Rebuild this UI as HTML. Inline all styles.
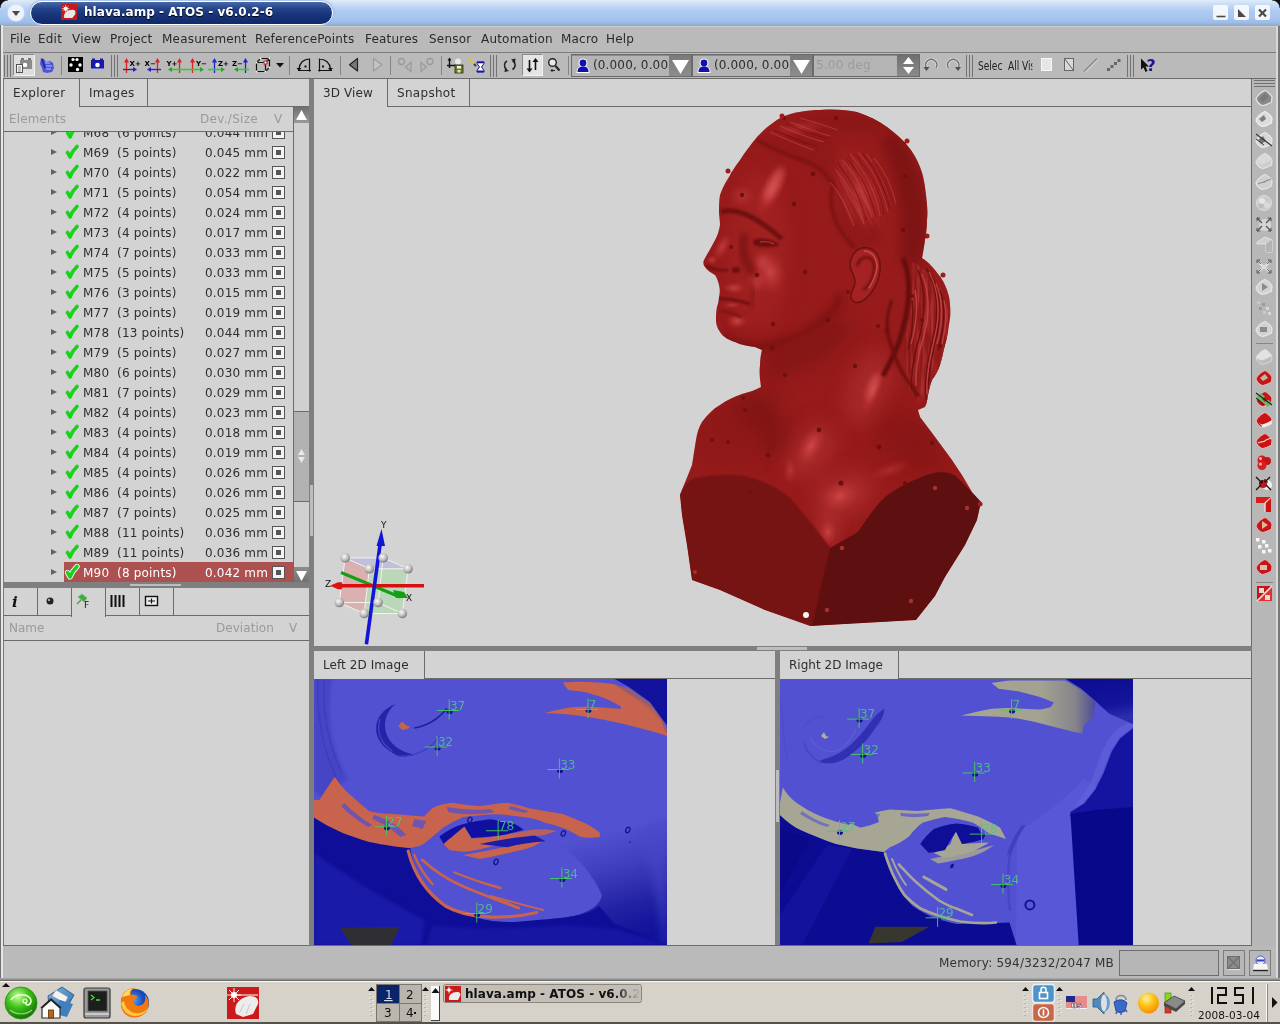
<!DOCTYPE html>
<html><head><meta charset="utf-8"><title>hlava.amp - ATOS - v6.0.2-6</title>
<style>
*{box-sizing:border-box;margin:0;padding:0}
html,body{width:1280px;height:1024px;overflow:hidden;background:#bababa;font-family:"DejaVu Sans","Liberation Sans",sans-serif;font-size:12px;color:#2e2e2e}
.a{position:absolute}
.t{position:absolute;white-space:nowrap;line-height:16px}
#titlebar{left:0;top:0;width:1280px;height:26px;background:linear-gradient(#dfebfa 0,#c6dbf6 20%,#aecbf1 42%,#a7c6ef 68%,#9dbde6 86%,#8ba8cf 100%)}
#pill{left:30px;top:1px;width:303px;height:24px;border-radius:12px;background:linear-gradient(#4a69a8 0,#25448a 30%,#17337a 60%,#0f2a6c 100%);border:1.5px solid #fff;box-shadow:0 0 2px 1px #9dbbe8}
#ttl{left:84px;top:4px;font-weight:bold;font-size:12px;color:#fff;letter-spacing:0.05px;text-shadow:0 1px 1px #000}
#menubar{left:0;top:26px;width:1280px;height:26px;background:#bababa}
.mi{position:absolute;top:31px;font-size:12px;color:#2a2a2a;white-space:nowrap;line-height:16px;letter-spacing:0.2px}
#toolbar{left:0;top:52px;width:1280px;height:27px;background:#bababa;border-top:1px solid #7d7d7d}
.panel{background:#d3d3d3}
.sep{position:absolute;top:56px;width:1px;height:19px;background:#858585}
.hdl{position:absolute;width:1px;background:#6f6f6f}
.tab{position:absolute;border:1px solid #6b6b6b;background:#d3d3d3;font-size:12px;line-height:16px;color:#2e2e2e;white-space:nowrap}
.row{position:absolute;left:0;margin-top:1px;width:293px;height:20px;font-size:12px;line-height:20px;color:#2e2e2e;letter-spacing:0.2px}
.row span{position:absolute;top:0;white-space:nowrap}
.row .ar{left:51px;top:6px;width:0;height:0;border-left:6px solid #636363;border-top:3.5px solid transparent;border-bottom:3.5px solid transparent}
.row .cb{left:272px;top:3px;width:13px;height:13px;background:#f4f4f4;border:1px solid #555}
.row .cb:after{content:"";position:absolute;left:3px;top:3px;width:5px;height:5px;background:#555}
.row svg{position:absolute;left:65px;top:2px}
.hd{color:#9a9a9a;font-size:12px;letter-spacing:0.3px}
#root{position:absolute;left:0;top:0;width:1280px;height:1024px;will-change:transform;overflow:hidden}
</style></head><body><div id="root">
<!-- title bar -->
<div class="a" id="titlebar"></div>
<div class="a" style="left:1272px;top:0;width:8px;height:8px;background:radial-gradient(circle at 0 100%,transparent 7px,#111 8px)"></div>
<div class="a" style="left:0;top:0;width:8px;height:8px;background:radial-gradient(circle at 100% 100%,transparent 7px,#111 8px)"></div>
<div class="a" style="left:8px;top:5px;width:16px;height:16px;border-radius:8px;background:#eef3fa;box-shadow:0 0 2px #fff"></div>
<svg class="a" style="left:11px;top:10px" width="10" height="7"><path d="M1 1h8L5 6z" fill="#4a4a4a"/></svg>
<div class="a" id="pill"></div>
<svg class="a" style="left:61px;top:4px" width="16" height="16" viewBox="0 0 17 17"><rect width="17" height="17" fill="#c51a1a"/><path d="M3 14c0-5 4-8 9-8 3 0 4 2 3 5l-3 4H4z" fill="#e8e8e8"/><circle cx="5" cy="5" r="2.2" fill="#fff"/><path d="M5 1v8M1 5h8M2.5 2.5l5 5M7.5 2.5l-5 5" stroke="#fff" stroke-width=".7"/></svg>
<div class="t" id="ttl">hlava.amp - ATOS - v6.0.2-6</div>
<div class="a" style="left:1213px;top:5px;width:15px;height:15px;border-radius:2px;background:rgba(248,250,253,.92)"></div>
<div class="a" style="left:1234px;top:5px;width:15px;height:15px;border-radius:2px;background:rgba(248,250,253,.92)"></div>
<div class="a" style="left:1255px;top:5px;width:15px;height:15px;border-radius:2px;background:rgba(248,250,253,.92)"></div>
<svg class="a" style="left:1213px;top:5px" width="58" height="15"><path d="M3.5 11.5h9" stroke="#4a4a4a" stroke-width="1.6"/><path d="M25 4v8h8z" fill="#4a4a4a"/><path d="M46 4.5l7 7M53 4.5l-7 7" stroke="#4a4a4a" stroke-width="2.2"/></svg>
<!-- menubar -->
<div class="a" id="menubar"></div>
<div class="a" id="mbtop" style="left:2px;top:26px;width:1275px;height:1px;background:#cdcdcd"></div>
<span class="mi" style="left:10px">File</span>
<span class="mi" style="left:38px">Edit</span>
<span class="mi" style="left:72px">View</span>
<span class="mi" style="left:110px">Project</span>
<span class="mi" style="left:162px">Measurement</span>
<span class="mi" style="left:255px">ReferencePoints</span>
<span class="mi" style="left:365px">Features</span>
<span class="mi" style="left:429px">Sensor</span>
<span class="mi" style="left:481px">Automation</span>
<span class="mi" style="left:561px">Macro</span>
<span class="mi" style="left:606px">Help</span>
<div class="a" id="toolbar"></div>
<div class="a" style="left:2px;top:78px;width:1275px;height:1px;background:#6b6b6b"></div>
<!-- window side borders -->
<div class="a" style="left:0;top:25px;width:1px;height:956px;background:#6f6f6f"></div>
<div class="a" style="left:1px;top:25px;width:2px;height:955px;background:#e6e6e6"></div>
<div class="a" style="left:1276px;top:26px;width:2px;height:956px;background:#d8d8d8"></div>
<div class="a" style="left:1278px;top:26px;width:2px;height:956px;background:#777"></div>
<!-- toolbar -->
<div class="a" style="left:13px;top:54px;width:22px;height:22px;background:#dedede;border:1px solid #8a8a8a;border-right-color:#f2f2f2;border-bottom-color:#f2f2f2"></div>
<div class="a" style="left:522px;top:54px;width:21px;height:22px;background:#e4e4e4;border:1px solid #8a8a8a;border-right-color:#f2f2f2;border-bottom-color:#f2f2f2"></div>
<svg class="a" style="left:0;top:52px" width="1280" height="27" viewBox="0 52 1280 27" font-family="DejaVu Sans, Liberation Sans, sans-serif">
<defs>
<marker id="mr" markerWidth="4" markerHeight="4" refX="2" refY="2" orient="auto"><path d="M0 0L4 2L0 4z" fill="#d22"/></marker>
</defs>
<!-- handles -->
<g stroke="#727272" stroke-width="1">
<path d="M4.5 55v22M7.5 55v22M10.5 55v22"/>
<path d="M111.500 55v22M114.500 55v22M117.500 55v22"/>
<path d="M490.500 55v22M493.500 55v22M496.500 55v22"/>
<path d="M966.500 55v22M969.500 55v22M972.500 55v22"/>
<path d="M1127.500 55v22M1130.500 55v22M1133.500 55v22"/>
</g>
<g stroke="#858585" stroke-width="1">
<path d="M61.500 56v19M289.500 56v19M340.500 56v19M390.500 56v19M441.500 56v19M568.500 56v19"/>
</g>
<!-- icon1: camera+doc -->
<rect x="20" y="60" width="12" height="9" fill="#8a8a8a"/><rect x="21" y="58" width="3" height="2" fill="#777"/><rect x="28" y="58" width="3" height="2" fill="#777"/><circle cx="25" cy="65" r="2.3" fill="#fff"/>
<rect x="16.500" y="64.500" width="6" height="8" fill="#f4f4f4" stroke="#555"/><path d="M18 67h3M18 69h3M18 71h3" stroke="#777" stroke-width=".8"/>
<!-- icon2: blue blob -->
<path d="M41 58l3 1 2 3 4-1 3 2 1 5-2 4-5 1-4-1-1-4-2-4z" fill="#4b55d8"/><path d="M45 63l5 0M46 66l6 0M46 69l5 0" stroke="#b9c0ff" stroke-width="1.2"/><path d="M42 59l3 9" stroke="#1a1f9a" stroke-width="1.5"/>
<!-- icon3: black square dots -->
<rect x="68" y="57" width="15" height="15" fill="#000"/><circle cx="73" cy="59.500" r="1.600" fill="#fff"/><circle cx="77" cy="59.500" r="1.600" fill="#fff"/><circle cx="71" cy="65" r="1.700" fill="#fff"/><circle cx="80" cy="65" r="1.700" fill="#fff"/><circle cx="77.500" cy="69.500" r="1.700" fill="#fff"/>
<!-- icon4: blue camera -->
<rect x="91" y="60" width="13" height="8" fill="#1a1aa8"/><rect x="92" y="58.500" width="3" height="1.500" fill="#1a1aa8"/><rect x="100" y="58.500" width="3" height="1.500" fill="#1a1aa8"/><circle cx="97.500" cy="65" r="2.300" fill="#fff"/><rect x="91" y="68" width="13" height="1" fill="#6a6ad0"/>
<!-- axis icons -->
<g font-size="7" font-weight="bold" fill="#000">
<path d="M126.500 73V60" stroke="#d22" stroke-width="1.300"/><path d="M124 62.500l2.500-4.500 2.500 4.500z" fill="#d22"/><path d="M123 69.500h11" stroke="#22c" stroke-width="1.300"/><path d="M133 67l4 2.500-4 2.500z" fill="#22c"/><text x="129.500" y="65.500">X+</text>
<path d="M157.500 73V60" stroke="#d22" stroke-width="1.300"/><path d="M155 62.500l2.500-4.500 2.500 4.500z" fill="#d22"/><path d="M150 69.500h11" stroke="#22c" stroke-width="1.300"/><path d="M151 67l-4 2.500 4 2.500z" fill="#22c"/><text x="144.500" y="65.500">X−</text>
<path d="M179.500 73V60" stroke="#d22" stroke-width="1.300"/><path d="M177 62.500l2.500-4.500 2.500 4.500z" fill="#d22"/><path d="M171 69.500h12" stroke="#3c3" stroke-width="1.600"/><path d="M172 67l-4 2.500 4 2.500z" fill="#2a2"/><text x="166.500" y="65.500">Y+</text>
<path d="M192.500 73V60" stroke="#d22" stroke-width="1.300"/><path d="M190 62.500l2.500-4.500 2.500 4.500z" fill="#d22"/><path d="M183 69.500h18" stroke="#3c3" stroke-width="1.600"/><path d="M200 67l4 2.500-4 2.500z" fill="#2a2"/><text x="196" y="65.500">Y−</text>
<path d="M214.500 73V60" stroke="#22c" stroke-width="1.300"/><path d="M212 62.500l2.500-4.500 2.500 4.500z" fill="#22c"/><path d="M208 69.500h14" stroke="#3c3" stroke-width="1.600"/><path d="M221 67l4 2.500-4 2.500z" fill="#2a2"/><text x="218" y="65.500">Z+</text>
<path d="M245.500 73V60" stroke="#22c" stroke-width="1.300"/><path d="M243 62.500l2.500-4.500 2.500 4.500z" fill="#22c"/><path d="M237 69.500h12" stroke="#3c3" stroke-width="1.600"/><path d="M238 67l-4 2.500 4 2.500z" fill="#2a2"/><text x="232" y="65.500">Z−</text>
</g>
<!-- cube icon -->
<g fill="none" stroke="#111" stroke-width="1.200"><path d="M256.500 62.500h9v9h-9zM256.500 62.500l4-4h9l-4 4M269.500 58.500v9l-4 4"/></g><path d="M263 61l5-2v5l-4 2z" fill="#c33" opacity=".8"/><g fill="#fff"><circle cx="256.500" cy="62.500" r="1"/><circle cx="265.500" cy="62.500" r="1"/><circle cx="256.500" cy="71.500" r="1"/><circle cx="265.500" cy="71.500" r="1"/><circle cx="260.500" cy="58.500" r="1"/><circle cx="269.500" cy="58.500" r="1"/><circle cx="269.500" cy="67.500" r="1"/></g>
<path d="M276 63h8l-4 4.500z" fill="#111"/>
<!-- rotate quarter icons -->
<g fill="none" stroke="#111" stroke-width="1.200"><path d="M298 70.500h13M309.500 58.500v13M309.500 59c-6 0-10 4-10.500 10"/><path d="M318 70.500h14M319.500 58.500v13M319.500 59c6 0 10.500 4 11 10"/></g>
<path d="M296.500 68h5l-2.500 3z" fill="#111"/><path d="M328 68h5l-2.500 3z" fill="#111"/><rect x="304.500" y="65.500" width="2" height="2" fill="#111"/><rect x="322" y="65.500" width="2" height="2" fill="#111"/>
<!-- triangles -->
<path d="M357.500 58.500v12.500l-8-6.250z" fill="#777" stroke="#222" stroke-width="1.200" stroke-linejoin="round"/>
<path d="M373.500 58.500v12.500l8.500-6.250z" fill="#c4c4c4" stroke="#9c9c9c" stroke-width="1.200" stroke-linejoin="round"/>
<!-- disabled circle+triangle -->
<g fill="none" stroke="#9a9a9a" stroke-width="1.300"><circle cx="401.500" cy="61.500" r="3"/><path d="M411 62.500v9l-5.500-4.500z"/><circle cx="430" cy="61.500" r="3"/><path d="M421 62.500v9l5.500-4.500z"/></g>
<!-- axis+floppy -->
<path d="M449.500 59v9M447 65.500h9" stroke="#111" stroke-width="1.400"/><path d="M447.500 60.500l2-3 2 3z" fill="#111"/><circle cx="458" cy="61.500" r="3" fill="#e8e8e8"/><rect x="455" y="65" width="8" height="8" fill="#6b7a2a" stroke="#2c3308" stroke-width=".8"/><rect x="457" y="66" width="4" height="2.500" fill="#f0f0f0"/><rect x="457.500" y="70" width="3" height="2.500" fill="#dfe6b0"/>
<!-- pencil+hourglass -->
<path d="M468.500 58.500l6.500 6.500" stroke="#e6c21a" stroke-width="1.800"/><path d="M474 64l2 2" stroke="#333" stroke-width="1.800"/><path d="M477 62h7v1.500l-2.500 3.500 2.500 3.500v1.500h-7v-1.500l2.500-3.500-2.500-3.500z" fill="#fff" stroke="#1a1aa0" stroke-width="1"/><rect x="477" y="61.500" width="7" height="1.800" fill="#1a1aa0"/><rect x="477" y="70.500" width="7" height="1.800" fill="#1a1aa0"/>
<!-- rotate arrows -->
<g fill="none" stroke="#222" stroke-width="1.500"><path d="M507 61c-3 1.500-3.500 6-.5 8.500"/><path d="M512.500 61c3.500 1.500 3.500 6.500 0 8.500"/></g><path d="M505 68l4 3-4.500 1z" fill="#222"/><path d="M515 62.500l-4-3 4.500-1z" fill="#222"/>
<!-- up/down arrows -->
<path d="M529.500 60v10M535.500 60v10" stroke="#111" stroke-width="1.600"/><path d="M526.500 68.500h6l-3 4z" fill="#111"/><path d="M532.500 62h6l-3-4z" fill="#111"/>
<!-- magnifier -->
<circle cx="552.500" cy="62.500" r="3.800" fill="#e8e8e8" stroke="#222" stroke-width="1.400"/><path d="M555.500 66l4 4.500" stroke="#222" stroke-width="2"/><path d="M551 70.500h4M551 70.500l1.500-1.500M551 70.500l1.500 1.500" stroke="#222" stroke-width="1"/>
<!-- disabled rotate icons -->
<g fill="none" stroke="#dcdcdc" stroke-width="3.400" opacity=".8"><path d="M926.500 68a5.600 5.600 0 1 1 9.500 0"/><path d="M948.500 68a5.600 5.600 0 1 1 9.500 0"/></g>
<g fill="none" stroke="#6e6e6e" stroke-width="1.300"><path d="M926.500 68a5.600 5.600 0 1 1 9.500 0"/><path d="M948.500 68a5.600 5.600 0 1 1 9.500 0"/></g><path d="M923.500 67h6l-3 4z" fill="#505050"/><path d="M955 67h6l-3 4z" fill="#505050"/>
<!-- select icons -->
<rect x="1041.500" y="58.500" width="10" height="12" fill="#e6e6e6" stroke="#f8f8f8"/><rect x="1064.500" y="58.500" width="9" height="12" fill="#d8d8d8" stroke="#666"/><path d="M1064.500 58.500l9 12" stroke="#666"/><path d="M1084 71.500l13-13" stroke="#888" stroke-width="1.400"/><path d="M1085 72.500l13-13" stroke="#ddd" stroke-width="1"/>
<g fill="#666"><rect x="1107" y="68" width="3" height="3"/><rect x="1110.500" y="65" width="3" height="3"/><rect x="1114" y="62" width="3" height="3"/><rect x="1117.500" y="59" width="3" height="3"/></g>
<!-- cursor ? -->
<path d="M1141 58.500v11l2.500-2 2 4.500 2-1-2-4.500h3.500z" fill="#111"/><text x="1146.500" y="71" font-size="16" font-weight="bold" fill="#1a1a90">?</text>
</svg>
<!-- combos -->
<div class="a" style="left:571px;top:54px;width:121px;height:23px;border:1px solid #6a6a6a;background:#b4b4b4;box-shadow:inset 0 1px 0 #8a8a8a"></div>
<div class="a" style="left:669px;top:55px;width:22px;height:21px;background:linear-gradient(#7a7a7a,#8c8c8c)"></div>
<div class="a" style="left:692px;top:54px;width:121px;height:23px;border:1px solid #6a6a6a;background:#b4b4b4;box-shadow:inset 0 1px 0 #8a8a8a"></div>
<div class="a" style="left:790px;top:55px;width:22px;height:21px;background:linear-gradient(#7a7a7a,#8c8c8c)"></div>
<div class="a" style="left:813px;top:54px;width:107px;height:23px;border:1px solid #6a6a6a;background:#b4b4b4;box-shadow:inset 0 1px 0 #8a8a8a"></div>
<div class="a" style="left:897px;top:55px;width:22px;height:21px;background:linear-gradient(#707070,#8a8a8a)"></div>
<svg class="a" style="left:571px;top:54px" width="350" height="23"><g fill="#fff"><path d="M101 6h17l-8.500 14z"/><path d="M222 6h17l-8.500 14z"/><path d="M332 10h11l-5.500-7z"/><path d="M332 13h11l-5.500 7z"/></g>
<g><path d="M5.500 19c0-5 2-7 6.500-7s6.500 2 6.500 7z" fill="#fff"/><circle cx="12" cy="9" r="4.500" fill="#fff"/><path d="M6.500 18c0-4 2-5.500 5.500-5.500s5.500 1.500 5.500 5.500z" fill="#1010b0"/><circle cx="12" cy="9" r="3.400" fill="#1010b0"/></g>
<g transform="translate(121 0)"><path d="M5.500 19c0-5 2-7 6.500-7s6.500 2 6.500 7z" fill="#fff"/><circle cx="12" cy="9" r="4.500" fill="#fff"/><path d="M6.500 18c0-4 2-5.500 5.500-5.500s5.500 1.500 5.500 5.500z" fill="#1010b0"/><circle cx="12" cy="9" r="3.400" fill="#1010b0"/></g></svg>
<div class="t" style="left:593px;top:57px;font-size:12px;letter-spacing:.15px;color:#2e2e2e;width:76px;overflow:hidden">(0.000, 0.000, 0.000)</div>
<div class="t" style="left:714px;top:57px;font-size:12px;letter-spacing:.15px;color:#2e2e2e;width:76px;overflow:hidden">(0.000, 0.000, 0.000)</div>
<div class="t" style="left:816px;top:57px;font-size:12px;letter-spacing:.2px;color:#9c9c9c">5.00 deg</div>
<div class="t" style="left:978px;top:58px;font-size:12px;font-family:'DejaVu Sans Condensed','DejaVu Sans',sans-serif;color:#222;width:28.600px;overflow:hidden;transform:scaleX(.84);transform-origin:0 0">Select</div>
<div class="t" style="left:1008px;top:58px;font-size:12px;font-family:'DejaVu Sans Condensed','DejaVu Sans',sans-serif;color:#222;width:28.500px;overflow:hidden;transform:scaleX(.84);transform-origin:0 0">All Visible</div>
<!-- left panel -->
<div class="a panel" style="left:3px;top:79px;width:306px;height:867px"></div>
<div class="a" style="left:3px;top:106px;width:306px;height:1px;background:#6b6b6b"></div>
<div class="tab" style="left:3px;top:79px;width:77px;height:28px;border-bottom:none;border-top:none;border-left:none;padding:6px 0 0 10px;letter-spacing:.3px">Explorer</div>
<div class="tab" style="left:80px;top:79px;width:68px;height:28px;border-top:none;border-left:none;padding:6px 0 0 9px;letter-spacing:.3px">Images</div>
<div class="a" style="left:3px;top:106px;width:291px;height:476px;overflow:hidden" id="tree">
<div class="row" style="top:16px"><span class="ar" style="left:48px"></span><svg width="16" height="19" style="left:62px;top:0"><path d="M2.500 9.500l2.500 4.500c1.500-4 4-7.500 7-10.500" fill="none" stroke="#16d416" stroke-width="3.600" stroke-linecap="round" stroke-linejoin="round"/></svg><span style="left:80px">M68</span><span style="left:114px">(6 points)</span><span style="left:202px">0.044 mm</span><span class="cb" style="left:269px"></span></div>
<div class="row" style="top:36px"><span class="ar" style="left:48px"></span><svg width="16" height="19" style="left:62px;top:0"><path d="M2.500 9.500l2.500 4.500c1.500-4 4-7.500 7-10.500" fill="none" stroke="#16d416" stroke-width="3.600" stroke-linecap="round" stroke-linejoin="round"/></svg><span style="left:80px">M69</span><span style="left:114px">(5 points)</span><span style="left:202px">0.045 mm</span><span class="cb" style="left:269px"></span></div>
<div class="row" style="top:56px"><span class="ar" style="left:48px"></span><svg width="16" height="19" style="left:62px;top:0"><path d="M2.500 9.500l2.500 4.500c1.500-4 4-7.500 7-10.500" fill="none" stroke="#16d416" stroke-width="3.600" stroke-linecap="round" stroke-linejoin="round"/></svg><span style="left:80px">M70</span><span style="left:114px">(4 points)</span><span style="left:202px">0.022 mm</span><span class="cb" style="left:269px"></span></div>
<div class="row" style="top:76px"><span class="ar" style="left:48px"></span><svg width="16" height="19" style="left:62px;top:0"><path d="M2.500 9.500l2.500 4.500c1.500-4 4-7.500 7-10.500" fill="none" stroke="#16d416" stroke-width="3.600" stroke-linecap="round" stroke-linejoin="round"/></svg><span style="left:80px">M71</span><span style="left:114px">(5 points)</span><span style="left:202px">0.054 mm</span><span class="cb" style="left:269px"></span></div>
<div class="row" style="top:96px"><span class="ar" style="left:48px"></span><svg width="16" height="19" style="left:62px;top:0"><path d="M2.500 9.500l2.500 4.500c1.500-4 4-7.500 7-10.500" fill="none" stroke="#16d416" stroke-width="3.600" stroke-linecap="round" stroke-linejoin="round"/></svg><span style="left:80px">M72</span><span style="left:114px">(4 points)</span><span style="left:202px">0.024 mm</span><span class="cb" style="left:269px"></span></div>
<div class="row" style="top:116px"><span class="ar" style="left:48px"></span><svg width="16" height="19" style="left:62px;top:0"><path d="M2.500 9.500l2.500 4.500c1.500-4 4-7.500 7-10.500" fill="none" stroke="#16d416" stroke-width="3.600" stroke-linecap="round" stroke-linejoin="round"/></svg><span style="left:80px">M73</span><span style="left:114px">(4 points)</span><span style="left:202px">0.017 mm</span><span class="cb" style="left:269px"></span></div>
<div class="row" style="top:136px"><span class="ar" style="left:48px"></span><svg width="16" height="19" style="left:62px;top:0"><path d="M2.500 9.500l2.500 4.500c1.500-4 4-7.500 7-10.500" fill="none" stroke="#16d416" stroke-width="3.600" stroke-linecap="round" stroke-linejoin="round"/></svg><span style="left:80px">M74</span><span style="left:114px">(7 points)</span><span style="left:202px">0.033 mm</span><span class="cb" style="left:269px"></span></div>
<div class="row" style="top:156px"><span class="ar" style="left:48px"></span><svg width="16" height="19" style="left:62px;top:0"><path d="M2.500 9.500l2.500 4.500c1.500-4 4-7.500 7-10.500" fill="none" stroke="#16d416" stroke-width="3.600" stroke-linecap="round" stroke-linejoin="round"/></svg><span style="left:80px">M75</span><span style="left:114px">(5 points)</span><span style="left:202px">0.033 mm</span><span class="cb" style="left:269px"></span></div>
<div class="row" style="top:176px"><span class="ar" style="left:48px"></span><svg width="16" height="19" style="left:62px;top:0"><path d="M2.500 9.500l2.500 4.500c1.500-4 4-7.500 7-10.500" fill="none" stroke="#16d416" stroke-width="3.600" stroke-linecap="round" stroke-linejoin="round"/></svg><span style="left:80px">M76</span><span style="left:114px">(3 points)</span><span style="left:202px">0.015 mm</span><span class="cb" style="left:269px"></span></div>
<div class="row" style="top:196px"><span class="ar" style="left:48px"></span><svg width="16" height="19" style="left:62px;top:0"><path d="M2.500 9.500l2.500 4.500c1.500-4 4-7.500 7-10.500" fill="none" stroke="#16d416" stroke-width="3.600" stroke-linecap="round" stroke-linejoin="round"/></svg><span style="left:80px">M77</span><span style="left:114px">(3 points)</span><span style="left:202px">0.019 mm</span><span class="cb" style="left:269px"></span></div>
<div class="row" style="top:216px"><span class="ar" style="left:48px"></span><svg width="16" height="19" style="left:62px;top:0"><path d="M2.500 9.500l2.500 4.500c1.500-4 4-7.500 7-10.500" fill="none" stroke="#16d416" stroke-width="3.600" stroke-linecap="round" stroke-linejoin="round"/></svg><span style="left:80px">M78</span><span style="left:114px">(13 points)</span><span style="left:202px">0.044 mm</span><span class="cb" style="left:269px"></span></div>
<div class="row" style="top:236px"><span class="ar" style="left:48px"></span><svg width="16" height="19" style="left:62px;top:0"><path d="M2.500 9.500l2.500 4.500c1.500-4 4-7.500 7-10.500" fill="none" stroke="#16d416" stroke-width="3.600" stroke-linecap="round" stroke-linejoin="round"/></svg><span style="left:80px">M79</span><span style="left:114px">(5 points)</span><span style="left:202px">0.027 mm</span><span class="cb" style="left:269px"></span></div>
<div class="row" style="top:256px"><span class="ar" style="left:48px"></span><svg width="16" height="19" style="left:62px;top:0"><path d="M2.500 9.500l2.500 4.500c1.500-4 4-7.500 7-10.500" fill="none" stroke="#16d416" stroke-width="3.600" stroke-linecap="round" stroke-linejoin="round"/></svg><span style="left:80px">M80</span><span style="left:114px">(6 points)</span><span style="left:202px">0.030 mm</span><span class="cb" style="left:269px"></span></div>
<div class="row" style="top:276px"><span class="ar" style="left:48px"></span><svg width="16" height="19" style="left:62px;top:0"><path d="M2.500 9.500l2.500 4.500c1.500-4 4-7.500 7-10.500" fill="none" stroke="#16d416" stroke-width="3.600" stroke-linecap="round" stroke-linejoin="round"/></svg><span style="left:80px">M81</span><span style="left:114px">(7 points)</span><span style="left:202px">0.029 mm</span><span class="cb" style="left:269px"></span></div>
<div class="row" style="top:296px"><span class="ar" style="left:48px"></span><svg width="16" height="19" style="left:62px;top:0"><path d="M2.500 9.500l2.500 4.500c1.500-4 4-7.500 7-10.500" fill="none" stroke="#16d416" stroke-width="3.600" stroke-linecap="round" stroke-linejoin="round"/></svg><span style="left:80px">M82</span><span style="left:114px">(4 points)</span><span style="left:202px">0.023 mm</span><span class="cb" style="left:269px"></span></div>
<div class="row" style="top:316px"><span class="ar" style="left:48px"></span><svg width="16" height="19" style="left:62px;top:0"><path d="M2.500 9.500l2.500 4.500c1.500-4 4-7.500 7-10.500" fill="none" stroke="#16d416" stroke-width="3.600" stroke-linecap="round" stroke-linejoin="round"/></svg><span style="left:80px">M83</span><span style="left:114px">(4 points)</span><span style="left:202px">0.018 mm</span><span class="cb" style="left:269px"></span></div>
<div class="row" style="top:336px"><span class="ar" style="left:48px"></span><svg width="16" height="19" style="left:62px;top:0"><path d="M2.500 9.500l2.500 4.500c1.500-4 4-7.500 7-10.500" fill="none" stroke="#16d416" stroke-width="3.600" stroke-linecap="round" stroke-linejoin="round"/></svg><span style="left:80px">M84</span><span style="left:114px">(4 points)</span><span style="left:202px">0.019 mm</span><span class="cb" style="left:269px"></span></div>
<div class="row" style="top:356px"><span class="ar" style="left:48px"></span><svg width="16" height="19" style="left:62px;top:0"><path d="M2.500 9.500l2.500 4.500c1.500-4 4-7.500 7-10.500" fill="none" stroke="#16d416" stroke-width="3.600" stroke-linecap="round" stroke-linejoin="round"/></svg><span style="left:80px">M85</span><span style="left:114px">(4 points)</span><span style="left:202px">0.026 mm</span><span class="cb" style="left:269px"></span></div>
<div class="row" style="top:376px"><span class="ar" style="left:48px"></span><svg width="16" height="19" style="left:62px;top:0"><path d="M2.500 9.500l2.500 4.500c1.500-4 4-7.500 7-10.500" fill="none" stroke="#16d416" stroke-width="3.600" stroke-linecap="round" stroke-linejoin="round"/></svg><span style="left:80px">M86</span><span style="left:114px">(4 points)</span><span style="left:202px">0.026 mm</span><span class="cb" style="left:269px"></span></div>
<div class="row" style="top:396px"><span class="ar" style="left:48px"></span><svg width="16" height="19" style="left:62px;top:0"><path d="M2.500 9.500l2.500 4.500c1.500-4 4-7.500 7-10.500" fill="none" stroke="#16d416" stroke-width="3.600" stroke-linecap="round" stroke-linejoin="round"/></svg><span style="left:80px">M87</span><span style="left:114px">(7 points)</span><span style="left:202px">0.025 mm</span><span class="cb" style="left:269px"></span></div>
<div class="row" style="top:416px"><span class="ar" style="left:48px"></span><svg width="16" height="19" style="left:62px;top:0"><path d="M2.500 9.500l2.500 4.500c1.500-4 4-7.500 7-10.500" fill="none" stroke="#16d416" stroke-width="3.600" stroke-linecap="round" stroke-linejoin="round"/></svg><span style="left:80px">M88</span><span style="left:114px">(11 points)</span><span style="left:202px">0.036 mm</span><span class="cb" style="left:269px"></span></div>
<div class="row" style="top:436px"><span class="ar" style="left:48px"></span><svg width="16" height="19" style="left:62px;top:0"><path d="M2.500 9.500l2.500 4.500c1.500-4 4-7.500 7-10.500" fill="none" stroke="#16d416" stroke-width="3.600" stroke-linecap="round" stroke-linejoin="round"/></svg><span style="left:80px">M89</span><span style="left:114px">(11 points)</span><span style="left:202px">0.036 mm</span><span class="cb" style="left:269px"></span></div>
<div class="a" style="left:61px;top:456px;width:230px;height:20px;background:#ad5050"></div>
<div class="row" style="top:456px;color:#fff"><span class="ar" style="left:48px"></span><svg width="16" height="19" style="left:62px;top:0"><path d="M2.500 9.500l2.500 4.500c1.500-4 4-7.500 7-10.500" fill="none" stroke="#f4f4f4" stroke-width="5.400" stroke-linecap="round" stroke-linejoin="round"/><path d="M2.500 9.500l2.500 4.500c1.500-4 4-7.500 7-10.500" fill="none" stroke="#16d416" stroke-width="3.600" stroke-linecap="round" stroke-linejoin="round"/></svg><span style="left:80px">M90</span><span style="left:114px">(8 points)</span><span style="left:202px">0.042 mm</span><span class="cb" style="left:269px"></span></div>
</div>
<div class="a" style="left:3px;top:107px;width:291px;height:25px;background:#d3d3d3;border-bottom:1px solid #6b6b6b"></div>
<div class="t hd" style="left:9px;top:111px;letter-spacing:.15px">Elements</div>
<div class="t hd" style="left:200px;top:111px">Dev./Size</div>
<div class="t hd" style="left:274px;top:111px">V</div>
<div class="a" style="left:293px;top:107px;width:16px;height:479px;background:#d0d0d0;border-left:1px solid #6b6b6b"></div>
<div class="a" style="left:294px;top:107px;width:15px;height:16px;background:linear-gradient(#6f6f6f,#9a9a9a)"></div>
<svg class="a" style="left:294px;top:107px" width="15" height="16"><path d="M2 13h11L7.500 3z" fill="#fff"/></svg>
<div class="a" style="left:294px;top:411px;width:15px;height:91px;background:#b2b2b2;border-top:1px solid #6b6b6b;border-bottom:1px solid #6b6b6b"></div>
<svg class="a" style="left:294px;top:446px" width="15" height="20"><path d="M4 9h7L7.500 3zM4 11h7L7.500 17z" fill="#e8e8e8"/></svg>
<div class="a" style="left:294px;top:567px;width:15px;height:17px;background:linear-gradient(#8c8c8c,#6f6f6f)"></div>
<svg class="a" style="left:294px;top:567px" width="15" height="17"><path d="M2 4h11L7.500 14z" fill="#fff"/></svg>
<div class="a" style="left:3px;top:582px;width:306px;height:6px;background:#7f7f7f"></div>
<div class="a" style="left:130px;top:584px;width:51px;height:2px;background:#bdbdbd"></div>
<div class="a" style="left:3px;top:615px;width:306px;height:1px;background:#6b6b6b"></div>
<div class="tab" style="left:3px;top:588px;width:35px;height:28px;border-top:none"></div>
<div class="tab" style="left:37px;top:588px;width:35px;height:28px;border-top:none"></div>
<div class="tab" style="left:71px;top:588px;width:35px;height:29px;border-bottom:none;border-top:none"></div>
<div class="tab" style="left:105px;top:588px;width:35px;height:28px;border-top:none"></div>
<div class="tab" style="left:139px;top:588px;width:35px;height:28px;border-top:none"></div>
<svg class="a" style="left:3px;top:588px" width="175" height="28" font-family="DejaVu Serif, Liberation Serif, serif">
<text x="9" y="19" font-size="15" font-weight="bold" font-style="italic" fill="#111">i</text>
<circle cx="47" cy="13" r="3.500" fill="#222"/><circle cx="46" cy="12" r="1.200" fill="#aaa"/>
<path d="M75 9l4-3 5 4-3 4z" fill="#4a4" stroke="#7b7" stroke-width=".6"/><path d="M74 16l4-4" stroke="#595" stroke-width="1.500"/><text x="81" y="20" font-size="9" font-family="DejaVu Sans, Liberation Sans, sans-serif" fill="#111">F</text>
<path d="M108.500 7v12M112.500 7v12M116.500 7v12M120.500 7v12" stroke="#111" stroke-width="2"/>
<rect x="142.500" y="8.500" width="12" height="9" fill="#eee" stroke="#111" stroke-width="1.400"/><path d="M145 13h7M148.500 10.500v5" stroke="#111" stroke-width="1.200"/>
</svg>
<div class="a" style="left:3px;top:640px;width:306px;height:1px;background:#6b6b6b"></div>
<div class="t hd" style="left:9px;top:620px;letter-spacing:0">Name</div>
<div class="t hd" style="left:216px;top:620px;letter-spacing:.05px">Deviation</div>
<div class="t hd" style="left:289px;top:620px">V</div>
<div class="a" style="left:3px;top:79px;width:1px;height:867px;background:#7a7a7a"></div>
<div class="a" style="left:3px;top:945px;width:306px;height:1px;background:#6b6b6b"></div>
<div class="a" style="left:309px;top:79px;width:5px;height:867px;background:#7f7f7f"></div>
<div class="a" style="left:310px;top:485px;width:3px;height:51px;background:#bdbdbd"></div>
<!-- main 3D panel -->
<div class="a panel" style="left:314px;top:79px;width:938px;height:567px;border-right:1px solid #6b6b6b"></div>
<div class="a" style="left:314px;top:106px;width:937px;height:1px;background:#6b6b6b"></div>
<div class="tab" style="left:314px;top:79px;width:74px;height:28px;border-bottom:none;border-left:none;border-top:none;padding:6px 0 0 9px;letter-spacing:.1px">3D View</div>
<div class="tab" style="left:388px;top:79px;width:82px;height:28px;border-top:none;border-left:none;padding:6px 0 0 9px;letter-spacing:.3px">Snapshot</div>
<!-- horizontal splitter -->
<div class="a" style="left:314px;top:646px;width:938px;height:5px;background:#7f7f7f"></div>
<div class="a" style="left:757px;top:647px;width:50px;height:3px;background:#bdbdbd"></div>
<svg class="a" style="left:314px;top:107px" width="937" height="539" viewBox="314 107 937 539">
<defs>
<filter id="b3" color-interpolation-filters="sRGB" x="-50%" y="-50%" width="200%" height="200%"><feGaussianBlur stdDeviation="3"/></filter>
<filter id="b6" color-interpolation-filters="sRGB" x="-50%" y="-50%" width="200%" height="200%"><feGaussianBlur stdDeviation="6"/></filter>
<filter id="b10" color-interpolation-filters="sRGB" x="-50%" y="-50%" width="200%" height="200%"><feGaussianBlur stdDeviation="10"/></filter>
<filter id="b1" color-interpolation-filters="sRGB" x="-50%" y="-50%" width="200%" height="200%"><feGaussianBlur stdDeviation="1.2"/></filter>
<filter id="strk" color-interpolation-filters="sRGB" x="-10%" y="-10%" width="120%" height="120%"><feTurbulence type="fractalNoise" baseFrequency="0.35 0.03" numOctaves="2" seed="4" result="n"/><feColorMatrix in="n" type="matrix" values="0 0 0 0 1  0 0 0 0 1  0 0 0 0 1  2.6 0 0 0 -1.05" result="a"/><feComposite in="SourceGraphic" in2="a" operator="in"/></filter>
<clipPath id="hc"><path id="hp" d="M820 110C835 109 847 110 857 112C869 116 879 121 887 127C895 133 902 139 907 145C913 152 917 159 920 167C924 177 925 186 926 195C927 204 928 212 927 220C927 228 926 234 925 240C924 247 923 253 922 258C927 261 931 265 935 270C939 275 943 280 945 285C948 292 950 298 950 305C951 312 950 319 949 325C948 332 947 339 945 345C943 352 942 359 940 365C938 371 935 376 932 380C930 385 929 390 928 395C927 400 927 404 925 407L918 410L920 417L935 437L952 460L962 475L972 492L981 502L977 520L965 545L945 577L935 596L916 620L845 624L810 626L765 610L720 590L692 580L687 545L682 515L680 495L692 465L696 440C697 433 699 427 702 422C707 415 713 409 720 405C727 400 734 397 742 394C749 392 756 390 761 387C760 380 759 372 760 365C760 359 761 354 762 350L755 347C748 346 741 345 735 342C729 340 723 337 720 332C717 328 716 324 716 320C716 316 716 311 717 307C718 304 719 300 719 297C720 293 720 289 719 285C718 281 717 278 715 275C711 273 707 270 705 267C703 265 703 262 704 260C707 254 711 248 714 242C717 237 719 231 720 225C720 221 719 216 719 212C719 206 719 200 720 195C722 189 725 183 729 177C732 171 736 165 740 160C745 152 751 144 757 137C764 129 773 122 782 117C794 112 807 110 820 110Z"/></clipPath>
<radialGradient id="hl" cx=".5" cy=".5" r=".5"><stop offset="0" stop-color="#d04a4a" stop-opacity=".95"/><stop offset=".5" stop-color="#c03838" stop-opacity=".6"/><stop offset="1" stop-color="#b02a2a" stop-opacity="0"/></radialGradient>
<radialGradient id="dk" cx=".5" cy=".5" r=".5"><stop offset="0" stop-color="#701010" stop-opacity=".8"/><stop offset="1" stop-color="#801414" stop-opacity="0"/></radialGradient>
</defs>
<use href="#hp" fill="#971b1b"/>
<g clip-path="url(#hc)">
<!-- broad shading -->
<path d="M893 130C915 150 926 185 927 220C927 240 924 255 920 268L900 262C905 230 900 180 880 140Z" fill="#7e1414" filter="url(#b6)"/>
<ellipse cx="850" cy="122" rx="55" ry="12" fill="#8a1717" filter="url(#b6)" opacity=".8"/>
<path d="M755 140C775 150 800 160 817 170C830 180 838 200 840 224C845 235 850 242 856 248L880 240C870 200 850 160 820 135Z" fill="#8c1818" filter="url(#b3)" opacity=".7"/>
<path d="M762 350C790 350 820 335 842 312L852 330C836 352 806 374 764 374Z" fill="#801515" filter="url(#b10)" opacity=".9"/>
<path d="M764 388C775 400 785 420 790 446L770 460C760 440 745 420 720 410Z" fill="#801515" filter="url(#b10)" opacity=".9"/>
<ellipse cx="725" cy="440" rx="30" ry="30" fill="#8c1818" filter="url(#b10)" opacity=".7"/>
<ellipse cx="905" cy="440" rx="40" ry="22" fill="#8c1818" filter="url(#b10)" opacity=".7" transform="rotate(40 905 440)"/>
<ellipse cx="868" cy="388" rx="20" ry="40" fill="#b43434" opacity=".55" filter="url(#b10)" transform="rotate(20 868 388)"/>
<ellipse cx="812" cy="452" rx="20" ry="32" fill="#b43434" opacity=".55" filter="url(#b10)" transform="rotate(35 812 452)"/>
<ellipse cx="843" cy="495" rx="32" ry="20" fill="#b63636" opacity=".6" filter="url(#b10)" transform="rotate(-25 843 495)"/>
<ellipse cx="829" cy="528" rx="13" ry="18" fill="#b43434" opacity=".5" filter="url(#b6)"/>
<ellipse cx="758" cy="250" rx="30" ry="80" fill="#ac2828" opacity=".45" filter="url(#b10)"/>
<ellipse cx="915" cy="445" rx="34" ry="20" fill="#861616" opacity=".7" filter="url(#b10)" transform="rotate(45 915 445)"/>
<!-- highlights -->
<ellipse cx="772" cy="189" rx="11" ry="30" fill="url(#hl)" transform="rotate(27 772 189)"/>
<ellipse cx="774" cy="184" rx="5" ry="18" fill="#dc5a5a" opacity=".6" filter="url(#b3)" transform="rotate(27 774 184)"/>
<ellipse cx="742" cy="196" rx="14" ry="12" fill="url(#hl)" opacity=".45"/>
<ellipse cx="770" cy="272" rx="17" ry="24" fill="url(#hl)" opacity=".9" transform="rotate(-10 770 272)"/>
<ellipse cx="762" cy="262" rx="6" ry="7" fill="#d45252" opacity=".5" filter="url(#b3)"/>
<ellipse cx="756" cy="282" rx="6" ry="8" fill="#d45252" opacity=".4" filter="url(#b3)"/>
<ellipse cx="737" cy="321" rx="11" ry="8" fill="url(#hl)" opacity=".9"/>
<ellipse cx="722" cy="247" rx="7" ry="16" fill="url(#hl)" opacity=".7" transform="rotate(28 722 247)"/>
<ellipse cx="712" cy="260" rx="6" ry="5" fill="url(#hl)" opacity=".7"/>
<ellipse cx="734" cy="288" rx="12" ry="6" fill="url(#hl)" opacity=".8"/>
<ellipse cx="732" cy="305" rx="9" ry="3.500" fill="url(#hl)" opacity=".6"/>
<ellipse cx="800" cy="128" rx="30" ry="8" fill="url(#hl)" opacity=".4" transform="rotate(-8 800 128)"/>
<g filter="url(#strk)" transform="rotate(-24 858 192)"><ellipse cx="858" cy="192" rx="30" ry="52" fill="url(#hl)"/></g>
<ellipse cx="858" cy="192" rx="22" ry="40" fill="url(#hl)" opacity=".45" transform="rotate(-24 858 192)"/>
<ellipse cx="873" cy="390" rx="8" ry="26" fill="url(#hl)" transform="rotate(22 873 390)"/>
<ellipse cx="872" cy="386" rx="3.500" ry="14" fill="#dc5c5c" opacity=".6" filter="url(#b3)" transform="rotate(22 872 386)"/>
<ellipse cx="811" cy="446" rx="12" ry="24" fill="url(#hl)" transform="rotate(28 811 446)"/>
<ellipse cx="840" cy="496" rx="22" ry="16" fill="url(#hl)" opacity=".9" transform="rotate(-25 840 496)"/>
<ellipse cx="828" cy="532" rx="9" ry="14" fill="url(#hl)" opacity=".8"/>
<ellipse cx="790" cy="470" rx="7" ry="14" fill="url(#hl)" opacity=".5"/>
<ellipse cx="890" cy="470" rx="22" ry="8" fill="url(#hl)" opacity=".4" transform="rotate(-20 890 470)"/>
<!-- face features (dark) -->
<path d="M721 212c10-3 22 0 34 7 10 6 18 12 27 20" stroke="#6e1010" stroke-width="5" fill="none" filter="url(#b1)"/>
<path d="M753 240c8-3 18-2 27 5-8 3-18 3-26 0z" fill="#6a0f0f" filter="url(#b1)"/>
<path d="M760 242c5-1 10 0 14 2" stroke="#a83030" stroke-width="1.400" fill="none"/>
<path d="M745 234c-4 12-1 28 8 40" stroke="#781313" stroke-width="7" fill="none" filter="url(#b3)"/>
<path d="M706 266c6 3 14 5 22 4" stroke="#6c1010" stroke-width="2.600" fill="none" filter="url(#b1)"/>
<ellipse cx="736" cy="270" rx="4" ry="3" fill="#6a0f0f" filter="url(#b1)"/>
<path d="M716 299c10-1 22 1 34 5" stroke="#6a0f0f" stroke-width="2.600" fill="none" filter="url(#b1)"/>
<path d="M720 311c6 0 14 3 22 6" stroke="#7c1414" stroke-width="2.600" fill="none" filter="url(#b1)"/>
<path d="M751 283c3 8 3 18-1 26" stroke="#821616" stroke-width="3.500" fill="none" filter="url(#b3)"/>
<path d="M722 336c14 8 30 12 44 10 22-4 46-14 62-30 6-6 10-14 13-22" stroke="#7a1313" stroke-width="7" fill="none" filter="url(#b3)" opacity=".9"/>
<!-- hairline -->
<path d="M757 140c14 8 32 16 46 20 12 4 22 12 30 24 -4 12-2 28 4 40 4 8 10 16 18 24" stroke="#761212" stroke-width="3.500" fill="none" filter="url(#b1)" opacity=".75"/>
<!-- hair strands -->
<g stroke="#c84a4a" stroke-width="1.100" fill="none" opacity=".55">
<path d="M842 160c14 14 24 34 30 58M850 154c14 16 26 38 30 62M836 170c12 14 22 32 28 54M858 152c14 16 24 36 30 60M866 154c12 14 20 30 26 52M830 182c10 12 18 26 24 44M874 158c10 12 18 28 22 46"/>
<path d="M770 132c14 6 30 14 44 18M780 126c14 6 28 12 44 16M790 122c14 5 26 10 40 14M800 118c14 4 26 8 38 12"/>
</g>
<g stroke="#701010" stroke-width="1.100" fill="none" opacity=".6">
<path d="M846 158c14 15 25 36 30 60M854 153c14 16 26 38 30 61M838 164c12 14 22 32 28 56M862 153c13 15 22 33 28 56M872 162c10 12 16 26 20 44M774 130c14 6 30 13 44 17M786 124c14 6 28 11 42 15"/>
</g>
<!-- ear -->
<path d="M850 264c1-11 9-18 18-16 9 2 13 11 12 22-1 12-8 24-16 30-7 5-14 2-13-5 1-6 4-8 4-14 0-6-5-9-5-17z" fill="#a42222" stroke="#701010" stroke-width="1.600"/>
<path d="M857 266c2-7 7-10 12-8 6 2 6 11 4 17-2 7-6 12-10 15" stroke="#6e1010" stroke-width="2.400" fill="none" filter="url(#b1)"/>
<path d="M864 251c8 0 13 7 13 16-1 8-4 15-8 21" stroke="#cc4c4c" stroke-width="1.600" fill="none" opacity=".9"/>
<!-- ponytail -->
<path d="M903 258c10 22 6 54-4 84-5 14-12 26-16 34" stroke="#640d0d" stroke-width="5" fill="none" filter="url(#b1)"/>
<path d="M912 262C930 270 946 290 948 312C950 340 940 372 928 404L912 396C906 380 902 360 905 340C910 312 915 285 912 262Z" fill="#8e1919"/>
<g filter="url(#strk)"><path d="M912 262C930 270 946 290 948 312C950 340 940 372 928 404L912 396C906 380 902 360 905 340C910 312 915 285 912 262Z" fill="#b83a3a" opacity=".8"/></g>
<g stroke="#6e1010" stroke-width="1.500" fill="none">
<path d="M926 268c10 16 14 40 8 66-4 18-10 40-8 66M932 276c8 16 10 38 4 62-4 18-8 34-8 52M918 270c8 20 8 46 0 72-4 14-8 30-6 48M940 290c6 16 4 40-2 60M912 300c2 16 0 34-4 50"/>
</g>
<g stroke="#c44444" stroke-width="1.400" fill="none" opacity=".85">
<path d="M929 272c9 16 12 40 6 64-4 18-9 36-8 58M922 274c8 20 8 44 0 68-4 14-7 28-6 44M936 284c7 16 7 38 1 60M944 300c3 12 2 28-2 44M915 290c3 16 1 36-4 54"/>
</g>
<path d="M886 328c4 14 8 30 16 44 6 10 14 20 20 30" stroke="#6e1010" stroke-width="3.500" fill="none" filter="url(#b1)"/>
<path d="M892 300c-4 10-6 22-4 32" stroke="#6a0f0f" stroke-width="3" fill="none" filter="url(#b1)"/>
<!-- cut faces -->
<path d="M680 495C683 487 688 480 694 478C712 474 730 474 745 476C762 480 778 488 790 498C802 510 816 530 830 548L812 626L765 610L720 590L692 580L687 545L682 515Z" fill="#761313"/>
<path d="M830 548L858 532C866 520 874 508 884 498C896 488 912 480 930 474C940 471 950 472 956 476L981 502L977 520L965 545L945 577L935 596L916 620L845 624L812 626Z" fill="#5e0f0f"/>
<path d="M680 495C683 487 688 480 694 478C712 474 730 474 745 476C762 480 778 488 790 498C802 510 816 530 830 548" stroke="#8a1717" stroke-width="1.500" fill="none"/>
<path d="M830 548l-18 78" stroke="#6e1111" stroke-width="1.200"/>
<!-- bumps -->
<g fill="#6e1010">
<circle cx="836" cy="118" r="2.200"/><circle cx="784" cy="118" r="2"/><circle cx="906" cy="142" r="2.200"/><circle cx="813" cy="174" r="2.400"/><circle cx="742" cy="195" r="2.200"/><circle cx="794" cy="204" r="2.400"/><circle cx="905" cy="176" r="2.200"/><circle cx="730" cy="172" r="2"/><circle cx="903" cy="230" r="2.200"/><circle cx="926" cy="236" r="2.200"/><circle cx="731" cy="247" r="2"/><circle cx="757" cy="275" r="2.200"/><circle cx="805" cy="272" r="2.200"/><circle cx="848" cy="292" r="2"/><circle cx="828" cy="320" r="2.400"/><circle cx="773" cy="324" r="2.200"/><circle cx="772" cy="348" r="2.400"/><circle cx="942" cy="276" r="2.200"/><circle cx="922" cy="320" r="2"/><circle cx="912" cy="296" r="2"/><circle cx="878" cy="326" r="2"/><circle cx="940" cy="346" r="2"/>
<circle cx="785" cy="375" r="2.200"/><circle cx="855" cy="366" r="2.200"/><circle cx="743" cy="398" r="2"/><circle cx="745" cy="410" r="2"/><circle cx="712" cy="440" r="2"/><circle cx="728" cy="442" r="2"/><circle cx="768" cy="455" r="2.200"/><circle cx="819" cy="430" r="2.400"/><circle cx="879" cy="447" r="2.400"/><circle cx="932" cy="443" r="2.200"/><circle cx="841" cy="483" r="2.600"/><circle cx="905" cy="483" r="2"/>
</g>
<g fill="#a83030"><circle cx="935" cy="488" r="2.200"/><circle cx="967" cy="508" r="2.200"/><circle cx="842" cy="548" r="2.200"/><circle cx="827" cy="610" r="2.200"/><circle cx="911" cy="601" r="2.200"/><circle cx="695" cy="572" r="2"/><circle cx="750" cy="492" r="1.800" fill="#6a1010"/></g>
<circle cx="806" cy="615" r="3" fill="#f4f4f4"/>
</g>
<!-- rim bumps outside silhouette -->
<g fill="#9e1c1c"><circle cx="782" cy="116" r="2.500"/><circle cx="907" cy="141" r="2.500"/><circle cx="728" cy="171" r="2.500"/><circle cx="927" cy="236" r="2.500"/><circle cx="943" cy="275" r="2.500"/><circle cx="980" cy="504" r="2.500"/><circle cx="920" cy="400" r="4"/></g>
</svg>
<svg class="a" style="left:314px;top:510px" width="140" height="136" viewBox="314 510 140 136" font-family="DejaVu Sans, Liberation Sans, sans-serif">
<defs><radialGradient id="sp" cx=".4" cy=".35" r=".65"><stop offset="0" stop-color="#fafafa"/><stop offset=".6" stop-color="#bdbdbd"/><stop offset="1" stop-color="#7c7c7c"/></radialGradient></defs>
<path d="M345.200 557.900L383.200 557.900L408.100 568.800L369.300 568.800Z" fill="#b9b9dc" opacity=".75"/>
<path d="M345.200 557.900L369.300 568.800L364.200 613.500L339.300 602.500Z" fill="#dca8a8" opacity=".8"/>
<path d="M369.300 568.800L408.100 568.800L402.300 613.500L364.200 613.500Z" fill="#b4d8b4" opacity=".8"/>
<g stroke="#f2f2f2" stroke-width="1" fill="none"><path d="M345.200 557.900L383.200 557.900L408.100 568.800L369.300 568.800ZM345.200 557.900L339.300 602.500L364.200 613.500L402.300 613.500L408.100 568.800M369.300 568.800L364.200 613.500M383.200 557.900L378.100 602.500L339.300 602.500M378.100 602.500L402.300 613.500"/></g>
<path d="M341 572.500L400 597" stroke="#14a014" stroke-width="3"/><path d="M393 590l11 2 4 6-12 0z" fill="#14a014"/>
<path d="M336 585.700H424" stroke="#d80f0f" stroke-width="3.400"/><path d="M330 585.700l8-3.500h4v7h-4z" fill="#e01010"/>
<path d="M380 545L366.400 644.300" stroke="#1414d8" stroke-width="3.600"/><path d="M381.500 529l3.500 17h-8.500z" fill="#1414d8"/>
<g fill="url(#sp)"><circle cx="345.200" cy="557.900" r="4.800"/><circle cx="383.200" cy="557.900" r="4.800"/><circle cx="408.100" cy="568.800" r="4.800"/><circle cx="369.300" cy="568.800" r="4.800"/><circle cx="339.300" cy="602.500" r="4.800"/><circle cx="378.100" cy="602.500" r="4.800"/><circle cx="402.300" cy="613.500" r="4.800"/><circle cx="364.200" cy="613.500" r="4.800"/></g>
<text x="381" y="528" font-size="9" fill="#111">Y</text><text x="325" y="587" font-size="9" fill="#111">Z</text><text x="406" y="601" font-size="9" fill="#111">X</text>
</svg>
<!-- bottom panels -->
<div class="a panel" style="left:314px;top:651px;width:461px;height:295px"></div>
<div class="a panel" style="left:780px;top:651px;width:472px;height:295px;border-right:1px solid #6b6b6b"></div>
<div class="a" style="left:775px;top:651px;width:5px;height:295px;background:#7f7f7f"></div>
<div class="a" style="left:776px;top:770px;width:3px;height:52px;background:#bdbdbd"></div>
<div class="a" style="left:314px;top:678px;width:461px;height:1px;background:#6b6b6b"></div>
<div class="a" style="left:780px;top:678px;width:471px;height:1px;background:#6b6b6b"></div>
<div class="tab" style="left:314px;top:651px;width:111px;height:28px;border:none;border-right:1px solid #6b6b6b;padding:6px 0 0 9px;letter-spacing:.08px">Left 2D Image</div>
<div class="tab" style="left:780px;top:651px;width:119px;height:28px;border:none;border-right:1px solid #6b6b6b;padding:6px 0 0 9px;letter-spacing:.02px">Right 2D Image</div>
<div class="a" style="left:314px;top:945px;width:937px;height:1px;background:#6b6b6b"></div>
<!-- status bar -->
<div class="t" style="left:939px;top:955px;font-size:12px;letter-spacing:.2px;color:#333">Memory: 594/3232/2047 MB</div>
<div class="a" style="left:1119px;top:950px;width:100px;height:26px;border:1px solid #6e6e6e;background:#b6b6b6"></div>
<div class="a" style="left:1223px;top:950px;width:22px;height:26px;border:1px solid #7c7c7c;background:#b8b8b8"></div>
<div class="a" style="left:1249px;top:950px;width:22px;height:26px;border:1px solid #7c7c7c;background:#b8b8b8"></div>
<svg class="a" style="left:1223px;top:950px" width="50" height="26"><rect x="4.500" y="6.500" width="12" height="12" fill="#8c8c8c" stroke="#6e6e6e"/><path d="M4.500 6.500l12 12M16.500 6.500l-12 12" stroke="#6e6e6e" stroke-width="1.200"/><path d="M5 19.500h12" stroke="#e4e4e4"/>
<circle cx="37.500" cy="10.500" r="4.500" fill="#e8ecff" stroke="#5560c8" stroke-width="1"/><path d="M33.500 10.500h8" stroke="#3545c0" stroke-width="2"/><path d="M31 14h13l1 6H30z" fill="#f6f6f6"/><path d="M30 20.500h15" stroke="#222" stroke-width="1.400"/></svg>
<!-- window bottom -->
<div class="a" style="left:0;top:978px;width:1280px;height:2px;background:linear-gradient(#aaa,#8a8a8a)"></div>
<div class="a" style="left:0;top:980px;width:1280px;height:1px;background:#6a6a6a"></div>
<svg class="a" style="left:314px;top:679px" width="353" height="266" viewBox="0 0 352 266" preserveAspectRatio="none" font-family="DejaVu Sans, Liberation Sans, sans-serif">
<defs><linearGradient id="ng" x1=".2" y1="0" x2=".45" y2="1"><stop offset="0" stop-color="#5151d1"/><stop offset=".18" stop-color="#5050d0"/><stop offset=".45" stop-color="#3e3ebe"/><stop offset=".75" stop-color="#2222a4"/><stop offset="1" stop-color="#11119a"/></linearGradient><filter id="ib" color-interpolation-filters="sRGB" x="-20%" y="-20%" width="140%" height="140%"><feGaussianBlur stdDeviation="1.5"/></filter><filter id="ib4" color-interpolation-filters="sRGB" x="-30%" y="-30%" width="160%" height="160%"><feGaussianBlur stdDeviation="4"/></filter>
<filter id="ostr" color-interpolation-filters="sRGB" x="-5%" y="-5%" width="110%" height="110%"><feTurbulence type="fractalNoise" baseFrequency="0.09 0.5" numOctaves="2" seed="7" result="n"/><feColorMatrix in="n" type="matrix" values="0 0 0 0 1  0 0 0 0 1  0 0 0 0 1  3 0 0 0 -1.25" result="a"/><feComposite in="SourceGraphic" in2="a" operator="in"/></filter></defs>
<rect width="352" height="266" fill="#5151d1"/>
<path d="M0 0H18C12 30 16 70 34 100L8 118L0 112Z" fill="#4545c6" filter="url(#ib)"/>
<path d="M4 0C2 30 8 70 22 98M10 0C8 30 14 66 28 94" stroke="#3a3abc" stroke-width="1.200" fill="none" opacity=".8"/>
<path d="M243 165C262 176 280 198 287 216C286 228 268 236 253 238L236 266H352V140C320 150 280 158 243 165Z" fill="url(#ng)"/>
<path d="M322 150L352 140V266H348C345 225 335 185 322 150Z" fill="#4848c8" opacity=".55" filter="url(#ib4)"/>
<path d="M0 137C20 150 55 163 96 169C99 190 110 212 131 227C150 237 176 244 200 243C225 241 245 239 253 238C268 236 280 232 284 227L300 245L352 266H0Z" fill="#0e0e98"/>
<path d="M0 174C20 188 40 200 55 210C75 222 95 233 110 241L107 266H0Z" fill="#1a1aa8" filter="url(#ib)"/>
<path d="M118 246C150 250 200 250 250 246L300 250L352 266H112Z" fill="#1616a2" filter="url(#ib)"/>
<path d="M300 0L314 8L335 23L347 40L352 46V0Z" fill="#12129c"/>
<path d="M248 3.500C262 2 285 3 300 5.500C306 9 310 12 314 15C322 19 329 23 335 28C340 32 343 37 346 41.500L352 55.500V57C344 54 336 52 328 50C318 47 309 45 300 43C291 41 282 39.500 273 38C266 37 259 36 252 35.300L230 34C238 32 245 30 252 29C259 28 266 27.500 273 27.700C284 28 295 29 306 29.700L306 27.500C302 25 298 23 293.500 20.700C287 18 280 16 273 13.800C266 12 259 11.500 253.400 11Z" fill="#c8634d"/>
<path d="M300 6C312 14 330 26 346 42L352 56V50L347 40L335 24L314 9Z" fill="#b4604e" opacity=".7"/>
<path d="M20.600 97.700C24 103 30 110 34 114C42 121 50 128 55 132C62 134 70 135 77 134.800C88 136 100 137 110 137.500C113 134 116 131 118 129C124 126 131 124.500 137.500 123.800C146 125 156 127 165 127C174 126 184 124 192.500 123.700C200 125 208 127.500 214.500 129.300C226 131.500 238 133 247.500 134.800C256 138 264 142 270 144C276 147 282 151 285 153.700V158C280 159 272 159 266 158C262 156 257 153 253.400 151C246 148 238 145.500 231 144C225 141.500 220 139.500 214.700 138.900C203 137 190 135.500 178.800 135.300C168 136 158 137 148.500 138C142 141 135 145 129 148.500C125 152 120 156 116 159.500C112 163 108 166 105 167L96 169C86 168.500 70 166 55 163C45 160 36 157 27.500 153.600C18 149 8 144 0 138.500V121C2 121 4 121 5.500 121C10 113 16 105 20.600 97.700Z" fill="#c8634d"/>
<g fill="#5151d1" opacity=".75"><path d="M60 136C72 140 84 146 92 156L86 158C78 150 68 144 58 140Z"/><path d="M132 128C146 130 160 132 176 130L180 133C164 136 148 136 134 133Z"/><path d="M100 140L112 142L108 150L98 147Z"/><path d="M30 124C38 132 48 140 58 146L54 148C44 142 34 134 27 127Z"/><path d="M196 127L214 132L210 134L194 130Z"/></g>
<path d="M129 165C135 160 142 154 150 147.500L157 159.500C165 159 172 158.500 179 158C187 157 196 155.500 203.500 154C200 158 196 161 192.500 163C180 167 166 170.500 154 172.500C146 173 140 172 135 171Z" fill="#c8634d"/>
<path d="M148.500 176C168 173 190 168 206 165C214 163.500 222 162 228 162C222 166 216 169 209 170.500C194 174 178 178 165 180Z" fill="#c8634d"/>
<path d="M176 158C190 156 204 153 216 151C224 150 234 150 242 152L230 156C214 158 196 162 180 164Z" fill="#c8634d" opacity=".85"/>
<path d="M125 157.500C131 153 137 149.500 143 147C152 144 164 141.500 176 140.300C184 141.500 194 144 200.700 145.200C204 147 207 149 209 150.700C200 153.500 190 156 178.800 157.300C171 158 164 158.500 157.300 159L150 147.500C145 151 141 155 137.500 158C134 160.500 131 163 129.200 165Z" fill="#1010a0"/>
<path d="M165 165C184 161 204 158 220 156.500L231 162.300C215 163.500 200 166 192.500 168.300Z" fill="#1c1ca8"/>
<g fill="none" stroke="#c8634d" stroke-linecap="round"><path d="M94 172C99 192 110 212 131 227C150 238 186 242 222 233.500" stroke-width="3.200"/><path d="M108 181C120 192 134 201 150 208C166 215 184 221 204 229" stroke-width="3"/><path d="M140 193.500C150 197.500 160 201 170.500 204.500L186 209" stroke-width="2.400"/><path d="M176 217C194 222 212 227 228.500 231" stroke-width="2"/><path d="M100 176C104 186 110 196 118 205" stroke-width="2.500"/></g>
<path d="M84 47L88 42.500L92 46.500L96 48L93 50L88 51Z" fill="#c8634d"/>
<path d="M75 66C78 70 83 73 90 75L86 76C80 74 76 71 73 67Z" fill="#c8634d"/>
<path d="M81 25C58 34 52 62 84 77C92 78 98 77 100 75.500C70 70 62 42 81 25Z" fill="#2424a8"/>
<path d="M84 77C100 78 118 70 125 57" stroke="#3c3cbe" stroke-width="1.300" fill="none"/>
<path d="M100 49C112 47 124 40 132.500 29.500" stroke="#1e1ea2" stroke-width="1.700" fill="none"/>
<path d="M66 40C62 52 66 64 78 72" stroke="#6464dc" stroke-width="1" fill="none" opacity=".6"/>
<path d="M26 248.500L85.300 248L77 266H37Z" fill="#2f2f33"/>
<ellipse cx="135.3" cy="32.8" rx="3" ry="2.300" fill="#10108c"/><path d="M122.8 31.6h22M134.8 20.6v20" stroke="#46d05a" stroke-width="1" opacity=".9"/><text x="135.6" y="30.8" font-size="12" fill="#4cc88a" opacity=".85">37</text>
<ellipse cx="273.7" cy="31.6" rx="3" ry="2.300" fill="#10108c"/><path d="M261.2 30.4h22M273.2 19.4v20" stroke="#46d05a" stroke-width="1" opacity=".9"/><text x="274.0" y="29.6" font-size="12" fill="#4cc88a" opacity=".85">7</text>
<ellipse cx="123.3" cy="69.2" rx="3" ry="2.300" fill="#10108c"/><path d="M110.8 68.0h22M122.8 57.0v20" stroke="#46d05a" stroke-width="1" opacity=".9"/><text x="123.6" y="67.2" font-size="12" fill="#4cc88a" opacity=".85">32</text>
<ellipse cx="245.2" cy="91.8" rx="3" ry="2.300" fill="#10108c"/><path d="M232.7 90.6h22M244.7 79.6v20" stroke="#46d05a" stroke-width="1" opacity=".9"/><text x="245.5" y="89.8" font-size="12" fill="#4cc88a" opacity=".85">33</text>
<ellipse cx="72.8" cy="148.9" rx="3" ry="2.300" fill="#10108c"/><path d="M60.3 147.7h22M72.3 136.7v20" stroke="#46d05a" stroke-width="1" opacity=".9"/><text x="73.1" y="146.9" font-size="12" fill="#4cc88a" opacity=".85">27</text>
<ellipse cx="184.1" cy="152.9" rx="3" ry="2.300" fill="#10108c"/><path d="M171.6 151.7h22M183.6 140.7v20" stroke="#46d05a" stroke-width="1" opacity=".9"/><text x="184.4" y="150.9" font-size="12" fill="#4cc88a" opacity=".85">78</text>
<ellipse cx="247.7" cy="200.8" rx="3" ry="2.300" fill="#10108c"/><path d="M235.2 199.6h22M247.2 188.6v20" stroke="#46d05a" stroke-width="1" opacity=".9"/><text x="248.0" y="198.8" font-size="12" fill="#4cc88a" opacity=".85">34</text>
<ellipse cx="162.8" cy="235.8" rx="3" ry="2.300" fill="#10108c"/><path d="M150.3 234.6h22M162.3 223.6v20" stroke="#46d05a" stroke-width="1" opacity=".9"/><text x="163.1" y="233.8" font-size="12" fill="#4cc88a" opacity=".85">29</text>
<ellipse cx="312.9" cy="151.0" rx="2" ry="2.800" fill="none" stroke="#14148c" stroke-width="1.300" transform="rotate(25 312.9 151.0)"/>
<ellipse cx="248.6" cy="154.4" rx="2" ry="2.800" fill="none" stroke="#14148c" stroke-width="1.300" transform="rotate(25 248.6 154.4)"/>
<ellipse cx="181.5" cy="182.8" rx="2" ry="2.800" fill="none" stroke="#14148c" stroke-width="1.300" transform="rotate(25 181.5 182.8)"/>
<ellipse cx="155.4" cy="140.8" rx="2" ry="2.800" fill="none" stroke="#14148c" stroke-width="1.300" transform="rotate(25 155.4 140.8)"/>
<circle cx="315" cy="163" r="1.200" fill="#3030b0"/>
</svg>
<svg class="a" style="left:780px;top:679px" width="353" height="266" viewBox="0 0 353 266" font-family="DejaVu Sans, Liberation Sans, sans-serif">
<defs><linearGradient id="gg" x1="0" y1="0" x2="1" y2="0"><stop offset="0" stop-color="#a7a694"/><stop offset=".6" stop-color="#a3a292"/><stop offset=".85" stop-color="#85848a"/><stop offset="1" stop-color="#4c4c9a"/></linearGradient><linearGradient id="cg" x1="0" y1="0" x2=".3" y2="1"><stop offset="0" stop-color="#0c0c90"/><stop offset=".7" stop-color="#14149c"/><stop offset="1" stop-color="#2c2cae"/></linearGradient></defs>
<rect width="353" height="266" fill="#5151d1"/>
<path d="M237 152C260 140 285 120 304 100L320 110L291 137L299 266H236Z" fill="#5757d7"/>
<path d="M0 136C8 143 14 148 20.700 151C32 156 44 161 55.300 164.800C64 167 74 169 83 170.300L103.700 173C105 179 108 186 110.600 191C113 198 116 205 119 210.400C123 217 128 222 132.700 227C139 231.500 146 235 152 238C160 241 170 243.500 177 245C195 245 212 244 229.500 243.600L236.500 266H0Z" fill="#0c0c92"/>
<path d="M47 166L72 170L22 266H0V236Z" fill="#1414a0" opacity=".8"/>
<path d="M0 150L30 160L0 215Z" fill="#090988" opacity=".7"/>
<path d="M354 48.400L340 59.500L332 72L323.600 94L315.300 110.600L304.200 124.400L290.400 133L290.400 137L354 137Z" fill="#1414a0"/>
<path d="M290.400 135L315 131L354 128V266H298.700Z" fill="#08088a"/>
<path d="M354 47L340 58L331 71L322.500 93L314 110L303 123.500L289 132L284 138C296 128 306 114 312 100C318 84 322 70 330 58C336 50 346 44 354 42Z" fill="#6666e2" opacity=".55"/>
<path d="M286 0L301.400 9.700L315.300 22L329 34.600L354 45.600V0Z" fill="url(#cg)"/>
<path d="M242 148C236 158 231 168 229.500 178.600C228 190 228 202 228.500 214C229 222 229.500 228 230 232" stroke="#4444c4" stroke-width="2.500" fill="none" opacity=".8"/>
<path d="M246 146C240 155 234 166 231 176L227 176C229 166 236 154 242 146Z" fill="#3c3cbc" opacity=".7"/>
<path d="M211.600 4.100C218 2.500 225 1.800 232.300 1.400H284.900C291 4.500 296 7.500 301.400 11C306 15 311 19 315.300 23.500C315 29 314 34 312.500 38.700C310 41 307 43.500 304.200 45.600L302.100 54.600C297 53.500 292 52.500 287.600 51.200C278 48.800 269 46.500 260 44.200C251 42 241 40 232.300 38.700C223 38 214 37.500 204.700 37.300L181 36.600C191 34 201 31.500 211.600 29.700C218 29.200 225 29 232.300 29C242 29.500 251 30 260 30.400C264 29.800 268 29 271 27.700L273.800 23.500C269 21.500 264 19.500 260 18C253 16 246 14 239.200 12.400C232 11.500 225 10.500 218.500 9.700Z" fill="url(#gg)"/>
<path d="M2.800 108.600C6 114 11 120 16.500 123.800C24 129 32 134 41.300 137.500C50 141 60 144 68.800 145.700C76 142 84 138 90.800 135.300C97 133 104 131.500 110 130.600C119 131 128 131.500 137.500 132C148 131 160 130 170.500 129.300C180 132 190 135 198 137.500C206 141 214 145 220 148.500L226 160C220 158 214 156 209 154.600C203 150 198 146.500 192.500 143.600C184 141 174 139 165 138C157 139.500 150 141.500 143 143.600C138 147 133 152 129.300 157.300C123 162 116 166 110 168.300L103.700 173L83 170.300C74 169 64 167 55.300 164.800C44 161 32 156 20.700 151C14 148 6 142 0 136V123.800Z" fill="#a7a694"/>
<g fill="#5151d1"><path d="M63 137C72 133 82 130 91 129C95 133 98 138 99 143C92 146 84 148 80 148.600C74 146 68 142 63 137Z"/><path d="M84 136C90 134.500 96 134 100 135C99 138 97 141 95 143C91 142 87 139 84 136Z" opacity=".6"/><path d="M120 134C130 135 140 135 150 134L148 137C139 138.500 130 138.500 121 137Z" opacity=".7"/><path d="M22 132C30 138 40 143 50 146L47 148C37 145 28 140 20 135Z" opacity=".6"/></g>
<path d="M154 174C160 171 166 168 170.500 165C172 160 174 156 176 152.600L182 165C192 164.500 201 164 209 163.600C204 167 198 170 192.500 172.400C183 175 173 177.500 165 179.300Z" fill="#a7a694"/>
<path d="M150 180C166 177 184 173 200 170L214 166C208 171 200 175 192 177.500C180 180.500 168 183 158 184.500Z" fill="#a7a694" opacity=".85"/>
<path d="M140.300 165C144 159 149 154 154 150C161 147 169 145 176 144.400C184 145 192 146.500 198 148.500L204 160C197 162 189 164 182 165L176 152.600C172 159 168 165 165 171C159 172.500 153 173.500 148.500 173.800Z" fill="#0e0e96"/>
<g fill="none" stroke="#a7a694" stroke-linecap="round"><path d="M105 174.500C108 184 111 192 114.800 199.400C118 206 121 211 124.400 216C129 221 135 226 141 229.800C152 235 166 239.500 180 242.500C192 244 206 244.500 216 243.500" stroke-width="2.600"/><path d="M118.900 185.500C125 192 131 199 138.300 205C145 211 152 216.500 159 221.500C165 225 171 228 177 229.800L192 236" stroke-width="2.600"/><path d="M143.800 198C151 202 159 206.500 166 210.400" stroke-width="3"/><path d="M112 180C116 190 120 198 126 206" stroke-width="2"/></g>
<path d="M104.400 29.700C104 36 101 42 96.800 47C92 54 88 60 83 65C78 70 72 75 66.400 78.800C62 81.500 57 83.500 52.500 84.300C47 84.500 42 84 37.300 83C42 80.500 48 79 53 77C60 74 66 70 71 65.500C78 59 84 52 89 45C94 38 99 33 104.400 29.700Z" fill="#3030b2"/>
<path d="M24 62C26 72 32 80 42 84" stroke="#4646c6" stroke-width="1.500" fill="none"/><path d="M30 58C34 68 44 74 56 72C66 68 72 60 76 50" stroke="#6262dc" stroke-width="1.200" fill="none" opacity=".8"/><path d="M22 50C28 40 38 36 46 38" stroke="#4a4aca" stroke-width="1.200" fill="none" opacity=".8"/>
<path d="M41 57L44 53L46 57L49 58L45 60Z" fill="#b0ae9c"/>
<path d="M0 20C4 40 2 60 8 80" stroke="#4a4aca" stroke-width="1.500" fill="none" opacity=".7"/>
<path d="M95.400 247.800L149.300 247.800L121.700 263L88.500 264.400Z" fill="#37372f"/>
<ellipse cx="79.6" cy="41.3" rx="3" ry="2.300" fill="#10108c"/><path d="M67.1 40.1h22M79.1 29.1v20" stroke="#46d05a" stroke-width="1" opacity=".9"/><text x="79.9" y="39.3" font-size="12" fill="#4cc88a" opacity=".85">37</text>
<ellipse cx="232.1" cy="32.3" rx="3" ry="2.300" fill="#10108c"/><path d="M219.6 31.1h22M231.6 20.1v20" stroke="#46d05a" stroke-width="1" opacity=".9"/><text x="232.4" y="30.3" font-size="12" fill="#4cc88a" opacity=".85">7</text>
<ellipse cx="83.2" cy="76.6" rx="3" ry="2.300" fill="#10108c"/><path d="M70.7 75.4h22M82.7 64.4v20" stroke="#46d05a" stroke-width="1" opacity=".9"/><text x="83.5" y="74.6" font-size="12" fill="#4cc88a" opacity=".85">32</text>
<ellipse cx="195.2" cy="95.2" rx="3" ry="2.300" fill="#10108c"/><path d="M182.7 94.0h22M194.7 83.0v20" stroke="#46d05a" stroke-width="1" opacity=".9"/><text x="195.5" y="93.2" font-size="12" fill="#4cc88a" opacity=".85">33</text>
<ellipse cx="60.0" cy="153.6" rx="3" ry="2.300" fill="#10108c"/><path d="M47.5 152.4h22M59.5 141.4v20" stroke="#46d05a" stroke-width="1" opacity=".9"/><text x="60.3" y="151.6" font-size="12" fill="#4cc88a" opacity=".85">27</text>
<ellipse cx="202.1" cy="156.3" rx="3" ry="2.300" fill="#10108c"/><path d="M189.6 155.1h22M201.6 144.1v20" stroke="#46d05a" stroke-width="1" opacity=".9"/><text x="202.4" y="154.3" font-size="12" fill="#4cc88a" opacity=".85">78</text>
<ellipse cx="223.5" cy="206.8" rx="3" ry="2.300" fill="#10108c"/><path d="M211.0 205.6h22M223.0 194.6v20" stroke="#46d05a" stroke-width="1" opacity=".9"/><text x="223.8" y="204.8" font-size="12" fill="#4cc88a" opacity=".85">34</text>
<ellipse cx="158.1" cy="240.0" rx="3" ry="2.300" fill="#10108c"/><path d="M145.6 238.8h22M157.6 227.8v20" stroke="#46d05a" stroke-width="1" opacity=".9"/><text x="158.4" y="238.0" font-size="12" fill="#4cc88a" opacity=".85">29</text>
<circle cx="249.900" cy="225.900" r="4.500" fill="none" stroke="#14148c" stroke-width="2"/>
<ellipse cx="172" cy="187" rx="1.500" ry="2.500" fill="#10108c" transform="rotate(30 172 187)"/>
</svg>
<!-- taskbar -->
<div class="a" style="left:0;top:981px;width:1280px;height:43px;background:#d6d2ca;border-top:1px solid #fbfbfb;border-bottom:2px solid #55524c"></div>
<svg class="a" style="left:0;top:982px" width="1280" height="40" viewBox="0 982 1280 40" font-family="DejaVu Sans, Liberation Sans, sans-serif">
<defs>
<radialGradient id="gb" cx=".4" cy=".3" r=".75"><stop offset="0" stop-color="#c8ff9a"/><stop offset=".45" stop-color="#3fc41a"/><stop offset="1" stop-color="#0f6a06"/></radialGradient>
<radialGradient id="yb" cx=".4" cy=".3" r=".75"><stop offset="0" stop-color="#fff39a"/><stop offset=".45" stop-color="#ffc21a"/><stop offset="1" stop-color="#f08a00"/></radialGradient>
<radialGradient id="ff" cx=".45" cy=".4" r=".6"><stop offset="0" stop-color="#5aa0f0"/><stop offset=".55" stop-color="#1a4fc0"/><stop offset="1" stop-color="#123a9a"/></radialGradient>
<linearGradient id="fd" x1="0" y1="0" x2="1" y2="1"><stop offset="0" stop-color="#7ab4e4"/><stop offset="1" stop-color="#2a6aa8"/></linearGradient>
</defs>
<path d="M2 987l4-4 4 4z" fill="#111"/>
<!-- suse ball -->
<circle cx="21" cy="1003" r="16" fill="url(#gb)" stroke="#2a8a12" stroke-width=".8"/>
<path d="M11 1000c4-6 14-7 19-2 2 3 1 6-2 7-2 0-3-2-2-3" stroke="#e9ffd9" stroke-width="1.600" fill="none"/><circle cx="25" cy="1001" r="2" fill="none" stroke="#e9ffd9" stroke-width="1.200"/><path d="M10 1010c6 5 16 5 22 0" stroke="#bff59a" stroke-width="1.200" fill="none" opacity=".7"/>
<!-- home folder -->
<path d="M48 996l14-9 12 8-10 18-14 4z" fill="url(#fd)" stroke="#1f4f80" stroke-width=".8"/><path d="M56 990l12 7-3 6-13-7z" fill="#f4f4f4" stroke="#999" stroke-width=".6"/><path d="M60 1000l13 4-6 13-12-3z" fill="#3f7fbd"/>
<path d="M42 1008l9-8 9 8v10h-18z" fill="#fafafa" stroke="#333" stroke-width="1.200"/><path d="M41 1008l10-9 10 9" stroke="#222" stroke-width="1.600" fill="none"/><rect x="48.500" y="1010" width="5" height="8" fill="#b8651a" stroke="#5a2c06" stroke-width=".8"/>
<!-- terminal -->
<rect x="84" y="988" width="26" height="30" rx="2" fill="#9a9a9a" stroke="#3a3a3a" stroke-width="1.200"/><rect x="88" y="991" width="19" height="20" fill="#1c1f1c" stroke="#555" stroke-width=".8"/><path d="M91 995l3 2.500-3 2.500M96 1000h4" stroke="#3fe03f" stroke-width="1.300" fill="none"/><path d="M85 1014h24" stroke="#c8c8c8" stroke-width="2"/>
<!-- firefox -->
<circle cx="135" cy="1003" r="14" fill="url(#ff)"/><path d="M121 1001c0-8 7-14 15-13-4 1-6 4-5 7 3-1 6 0 7 3-3 0-5 2-4 5 1 3 5 4 9 1 2-2 3-5 2-9 4 4 5 10 2 15-3 6-10 9-17 7-6-2-10-8-9-16z" fill="#f07a10"/><path d="M121 1003c1 7 7 13 14 13 6 0 11-3 13-8-3 4-8 6-13 5-6-1-10-6-11-12z" fill="#ffc840"/><path d="M122 997c2-5 6-8 11-9-3 2-4 5-3 7z" fill="#ffd860"/>
<!-- atos -->
<rect x="227" y="987" width="32" height="32" fill="#cc1a1a"/><path d="M236 1014c-3-9 4-17 14-18 6 0 9 3 8 8l-5 10-10 3z" fill="#ececec"/><path d="M240 1012l4-8M246 1014l4-10" stroke="#c8c8c8" stroke-width="1"/><circle cx="234" cy="995" r="3" fill="#fff"/><path d="M234 988v14M227 995h14M229 990l10 10M239 990l-10 10" stroke="#fff" stroke-width=".9"/><path d="M236 995h22" stroke="#fff" stroke-width="1"/>
<!-- pager -->
<path d="M368 991l3.500-4 3.500 4z" fill="#111"/><path d="M370 994v22M373 996v20" stroke="#f8f8f8" stroke-width="1" stroke-dasharray="1 3"/><path d="M371 995v22" stroke="#9a968e" stroke-width="1" stroke-dasharray="1 3"/>
<rect x="376.500" y="984.500" width="45" height="37" fill="#bab6ae" stroke="#7a766e"/><rect x="377" y="985" width="22" height="18" fill="#0a246a"/><path d="M399.500 985v36M377 1003.500h44" stroke="#7a766e"/>
<text x="385" y="999" font-size="12" fill="#d8d8e8" text-decoration="underline">1</text><text x="406" y="999" font-size="12" fill="#111">2</text><text x="384" y="1017" font-size="12" fill="#111">3</text><text x="406" y="1017" font-size="12" fill="#111">4</text><rect x="414" y="1012" width="2" height="2" fill="#111"/><path d="M384 1000.500h7" stroke="#d8d8e8"/>
<path d="M422 991l3.500-4 3.500 4z" fill="#111"/><path d="M424 994v22M427 996v20" stroke="#f8f8f8" stroke-width="1" stroke-dasharray="1 3"/><path d="M425 995v22" stroke="#9a968e" stroke-width="1" stroke-dasharray="1 3"/>
<rect x="431" y="986" width="8" height="35" fill="#fbfbfb"/><path d="M439.500 986v35M431 1020.500h9" stroke="#44413c" stroke-width="1"/><path d="M431.500 993l4-5 4 5z" fill="#111"/>
<!-- task button -->
<rect x="443.500" y="984.500" width="198" height="18" rx="2" fill="#c3bfb7" stroke="#8a867e"/>
<rect x="445" y="986" width="16" height="16" fill="#cc1a1a"/><path d="M449 1000c-1-5 3-8 8-8 3 0 4 2 3 4l-2 4z" fill="#ececec"/><circle cx="449" cy="990" r="1.800" fill="#fff"/><path d="M449 986.500v7M445.500 990h7" stroke="#fff" stroke-width=".7"/>
<!-- tray -->
<path d="M1022 991l3.500-4 3.500 4z" fill="#111"/><path d="M1024 994v22M1027 996v20" stroke="#f8f8f8" stroke-width="1" stroke-dasharray="1 3"/><path d="M1025 995v22" stroke="#9a968e" stroke-width="1" stroke-dasharray="1 3"/>
<rect x="1032.500" y="984.500" width="22" height="18" rx="3" fill="#4f94c8" stroke="#e8f0f8" stroke-width="1.500"/><rect x="1039.500" y="992.500" width="8" height="6" fill="none" stroke="#fff" stroke-width="1.600"/><path d="M1041 992v-2.500c0-3 5-3 5 0v2.500" stroke="#fff" stroke-width="1.500" fill="none"/>
<rect x="1032.500" y="1003.500" width="22" height="18" rx="3" fill="#c8684a" stroke="#f0e0d8" stroke-width="1.500"/><circle cx="1043.500" cy="1012.500" r="5" fill="none" stroke="#fff" stroke-width="1.600"/><path d="M1043.500 1009.500v6" stroke="#fff" stroke-width="1.600"/>
<path d="M1056 991l3.500-4 3.500 4z" fill="#111"/><path d="M1058 994v22M1061 996v20" stroke="#f8f8f8" stroke-width="1" stroke-dasharray="1 3"/><path d="M1059 995v22" stroke="#9a968e" stroke-width="1" stroke-dasharray="1 3"/>
<!-- flag -->
<rect x="1066" y="996" width="21" height="13" fill="#f4f4f4"/><path d="M1066 997h21M1066 999h21M1066 1001h21M1066 1003h21M1066 1005h21M1066 1007h21" stroke="#d22" stroke-width="1"/><rect x="1066" y="996" width="9" height="6" fill="#1a2a8a"/><text x="1071" y="1007.500" font-size="8" font-weight="bold" fill="#fff" stroke="#224" stroke-width=".4">us</text>
<!-- speaker -->
<path d="M1093 999h4l7-7v22l-7-7h-4z" fill="#4a8ac0" stroke="#2a5a88" stroke-width=".8"/><ellipse cx="1104" cy="1003" rx="3.500" ry="9" fill="#d8e0e8" stroke="#6a7a8a" stroke-width=".8"/><path d="M1106 996c4 3 4 11 0 14" stroke="#5a9ad0" stroke-width="1.600" fill="none"/>
<!-- network -->
<path d="M1116 1000c0-6 10-6 10 0" stroke="#7a8a9a" stroke-width="1.600" fill="none"/><path d="M1114 1002c4-3 10-3 13 1l-2 8c-3 2-7 2-9 0z" fill="#3a6ac8" stroke="#1a3a8a" stroke-width=".8"/><path d="M1117 1010l-1 4M1121 1011v4M1125 1009l2 3" stroke="#3a5ab0" stroke-width="1.400"/>
<!-- yellow ball -->
<circle cx="1148.500" cy="1003" r="10.500" fill="url(#yb)"/>
<!-- device -->
<rect x="1165" y="993" width="6" height="9" fill="#8ad81a" stroke="#4a7a0a" stroke-width=".6"/><rect x="1165" y="1004" width="6" height="9" fill="#d83a2a" stroke="#7a1a0a" stroke-width=".6"/><path d="M1164 1003l10-7 11 5-9 8z" fill="#8a8a8a" stroke="#3a3a3a" stroke-width=".8"/><path d="M1164 1003l12 6 9-8v3l-9 8-12-6z" fill="#4a4a4a"/>
<path d="M1188 991l3.500-4 3.500 4z" fill="#111"/><path d="M1190 994v22M1193 996v20" stroke="#f8f8f8" stroke-width="1" stroke-dasharray="1 3"/><path d="M1191 995v22" stroke="#9a968e" stroke-width="1" stroke-dasharray="1 3"/>
<!-- LCD clock 12 51 -->
<g stroke="#111" stroke-width="2" fill="none" stroke-linecap="square">
<path d="M1212 988v15"/>
<path d="M1218 988h8v7h-8v8h8"/>
<path d="M1243 988h-8v7h8v8h-8"/>
<path d="M1253 988v15"/>
</g>
<path d="M1266.500 984v38" stroke="#fbfbfb"/><path d="M1267.500 984v38" stroke="#8a867e"/>
<path d="M1272 997l5.500 5.500-5.500 5.500z" fill="#111"/>
</svg>
<div class="t" style="left:465px;top:986px;font-weight:bold;font-size:12px;color:#111;width:175px;overflow:hidden;letter-spacing:.05px;-webkit-mask-image:linear-gradient(90deg,#000 0,#000 85%,transparent 100%);mask-image:linear-gradient(90deg,#000 0,#000 85%,transparent 100%)">hlava.amp - ATOS - v6.0.2-6</div>
<div class="t" style="left:1198px;top:1007px;font-size:10.500px;color:#111;letter-spacing:.1px">2008-03-04</div>
<!-- right toolbar -->
<div class="a" style="left:1252px;top:79px;width:24px;height:867px;background:#b7b7b7"></div>
<svg class="a" style="left:1252px;top:79px" width="24" height="560" viewBox="1252 79 24 560">
<path d="M1254 80.500h21M1254 83.500h21M1254 86.500h21" stroke="#727272"/>
<path d="M1256 343.500h17M1256 582.500h17" stroke="#858585"/>
<g transform="translate(1264 98)"><path d="M-8 1C-7-2-3-6 1-7.500C3-7 7-3 8-1L7.500 4C4 6 0 7.500-2 7.500C-5 6-7 4-8 1Z" fill="#8a8a8a" stroke="#e6e6e6" stroke-width="1.200"/><path d="M-5 1L1-5L5-1L-1 4Z" fill="#7a7a7a"/></g>
<g transform="translate(1264 119)"><path d="M-8 1C-7-2-3-6 1-7.500C3-7 7-3 8-1L7.500 4C4 6 0 7.500-2 7.500C-5 6-7 4-8 1Z" fill="#dcdcdc" stroke="#f0f0f0" stroke-width="1.200"/><path d="M-5 0L0-4L2 0L-2 3Z" fill="#7e7e7e"/></g>
<g transform="translate(1264 140)"><path d="M-8 1C-7-2-3-6 1-7.500C3-7 7-3 8-1L7.500 4C4 6 0 7.500-2 7.500C-5 6-7 4-8 1Z" fill="#d6d6d6" stroke="#e8e8e8" stroke-width="1.200"/><path d="M-6 0L-1-4L2 1L-3 4Z" fill="#767676"/><path d="M-8-6L8 6" stroke="#333" stroke-width="1.100"/><path d="M-8-1L0 5" stroke="#333" stroke-width="1"/></g>
<g transform="translate(1264 161)"><path d="M-8 1C-7-2-3-6 1-7.500C3-7 7-3 8-1L7.500 4C4 6 0 7.500-2 7.500C-5 6-7 4-8 1Z" fill="#cdcdcd" stroke="#e4e4e4" stroke-width="1.200"/><path d="M-8 1C-7-2-3-6 1-7.500C3-7 7-3 8-1C4 1 1 2-2 3.500C-4 3-6 2-8 1Z" fill="#d9d9d9"/></g>
<g transform="translate(1264 182)"><path d="M-8 1C-7-2-3-6 1-7.500C3-7 7-3 8-1L7.500 4C4 6 0 7.500-2 7.500C-5 6-7 4-8 1Z" fill="#cfcfcf" stroke="#e4e4e4" stroke-width="1.200"/><path d="M-6 2C-3 0 0 1 2-1 4-2 5-2 7-3" stroke="#8a8a8a" stroke-width="1.200" fill="none"/></g>
<g transform="translate(1264 203)"><circle cx="0" cy="0" r="7.500" fill="#cacaca" stroke="#e0e0e0"/><circle cx="-2" cy="-2" r="3" fill="#e6e6e6"/><circle cx="3" cy="2" r="3" fill="#dadada"/><circle cx="-3" cy="3" r="2.500" fill="#bcbcbc"/></g>
<g transform="translate(1264 224)"><circle cx="1" cy="1" r="6" fill="#d6d6d6"/><path d="M-7-6L-2-1M7-6L2-1M-7 7L-2 2M7 7L2 2" stroke="#555" stroke-width="1.300"/><path d="M-7-6h3M-7-6v3M7-6h-3M7-6v3M-7 7h3M-7 7v-3M7 7h-3M7 7v-3" stroke="#555" stroke-width="1"/></g>
<g transform="translate(1264 245)"><path d="M-7-3L1-8L8-5L8 7L2 7L2-1L-7-1Z" fill="#cfcfcf" stroke="#e2e2e2"/><path d="M2-1L8-5L8 7L2 7Z" fill="#b4b4b4"/></g>
<g transform="translate(1264 266)"><path d="M-5-3L5 5M5-3L-5 5" stroke="#dcdcdc" stroke-width="2.500"/><path d="M-7-6h3M-7-6v3M7-6h-3M7-6v3M-7 7h3M-7 7v-3M7 7h-3M7 7v-3" stroke="#555" stroke-width="1"/><path d="M-6-5L-3-2M6-5L3-2M-6 6L-3 3M6 6L3 3" stroke="#666" stroke-width="1"/></g>
<g transform="translate(1264 287)"><path d="M-8 1C-7-2-3-6 1-7.500C3-7 7-3 8-1L7.500 4C4 6 0 7.500-2 7.500C-5 6-7 4-8 1Z" fill="#d2d2d2" stroke="#e6e6e6" stroke-width="1.200"/><path d="M-2-4L4 0L-2 4Z" fill="#8a8a8a"/></g>
<g transform="translate(1264 308)"><rect x="-7" y="-7" width="3" height="3" fill="#c8c8c8"/><rect x="-2" y="-5" width="3" height="3" fill="#9a9a9a"/><rect x="-5" y="-1" width="3" height="3" fill="#9a9a9a"/><rect x="2" y="-1" width="3" height="3" fill="#d8d8d8"/><rect x="-1" y="3" width="3" height="3" fill="#c8c8c8"/><rect x="4" y="4" width="3" height="3" fill="#d8d8d8"/></g>
<g transform="translate(1264 329)"><path d="M-8 1C-7-2-3-6 1-7.500C3-7 7-3 8-1L7.500 4C4 6 0 7.500-2 7.500C-5 6-7 4-8 1Z" fill="#d2d2d2" stroke="#e6e6e6" stroke-width="1.200"/><rect x="-4" y="-2" width="7" height="5" fill="#8a8a8a"/></g>
<g transform="translate(1264 357)"><path d="M-8 1C-7-2-3-6 1-7.500C3-7 7-3 8-1L7.500 4C4 6 0 7.500-2 7.500C-5 6-7 4-8 1Z" fill="#bdbdbd" stroke="#d8d8d8" stroke-width="1"/><path d="M-8 1C-7-2-3-6 1-7.500C3-7 7-3 8-1C4 1 1 2-2 3.500C-4 3-6 2-8 1Z" fill="#e2e2e2"/></g>
<g transform="translate(1264 378)"><path d="M-8 1C-7-2-3-6 1-7.500C3-7 7-3 8-1L7.500 4C4 6 0 7.500-2 7.500C-5 6-7 4-8 1Z" fill="#c81414" stroke="#e8b8b8" stroke-width="1"/><path d="M-4 0L1-4L4 0L-1 3Z" fill="#b8b8a8"/></g>
<g transform="translate(1264 399)"><path d="M-8 1C-7-2-3-6 1-7.500C3-7 7-3 8-1L7.500 4C4 6 0 7.500-2 7.500C-5 6-7 4-8 1Z" fill="#c81414" stroke="#e8b8b8" stroke-width="1"/><path d="M-8-2L-3-6L8 4L4 8Z" fill="#6ab86a"/><path d="M-2 0L2-3L5 0L1 3Z" fill="#c81414"/><path d="M-8-6L8 6" stroke="#222" stroke-width="1.100"/><path d="M-8-1L0 6" stroke="#222" stroke-width="1"/></g>
<g transform="translate(1264 420)"><path d="M-8 1C-7-2-3-6 1-7.500C3-7 7-3 8-1L7.500 4C4 6 0 7.500-2 7.500C-5 6-7 4-8 1Z" fill="#c81414" stroke="#e8c8c8" stroke-width="1"/><path d="M-8 2C-5 3-1 6-2 7.500 2 7 6 5 7.500 4L8 0C5 2 1 4-2 4.500Z" fill="#ececec"/></g>
<g transform="translate(1264 441)"><path d="M-8 1C-7-2-3-6 1-7.500C3-7 7-3 8-1L7.500 4C4 6 0 7.500-2 7.500C-5 6-7 4-8 1Z" fill="#c81414" stroke="#e8b8b8" stroke-width="1"/><path d="M-6 2C-3 0 0 2 2-1 4-2 5-2 7-3" stroke="#f0d8c8" stroke-width="1.300" fill="none"/></g>
<g transform="translate(1264 462)"><circle cx="-2" cy="-2" r="4.500" fill="#d81818"/><circle cx="3" cy="-1" r="4" fill="#c81414"/><circle cx="-2" cy="3.500" r="4.500" fill="#d42020"/><circle cx="-3.500" cy="-3.500" r="1.500" fill="#f4b0b0"/><circle cx="-3.500" cy="2" r="1.500" fill="#f4b0b0"/></g>
<g transform="translate(1264 483)"><circle cx="3" cy="2" r="5" fill="#f0f0f0"/><circle cx="-1" cy="1" r="4" fill="#c81414"/><path d="M-8-6L-2 0M6-6L1-1M-8 7L-3 2M7 7L2 2" stroke="#111" stroke-width="1.300"/><path d="M-2 0h-3M-2 0v-3M1-1h3M1-1v-3" stroke="#111" stroke-width="1.200"/></g>
<g transform="translate(1264 504)"><path d="M-8-7L7-7L7 8L1 8L1-1L-8-1Z" fill="#c81414"/><path d="M7-7L1-1L1 8" stroke="#f4d0d0" stroke-width="1.500" fill="none"/><path d="M-8-7L7-7L-1-1L-8-1Z" fill="#d81c1c"/></g>
<g transform="translate(1264 525)"><path d="M-8 1C-7-2-3-6 1-7.500C3-7 7-3 8-1L7.500 4C4 6 0 7.500-2 7.500C-5 6-7 4-8 1Z" fill="#c81414" stroke="#e8b8b8" stroke-width="1"/><path d="M-2-4L4 0L-2 4Z" fill="#d8b89a"/></g>
<g transform="translate(1264 546)"><rect x="-8" y="-8" width="3.500" height="3.500" fill="#f6f6f6"/><rect x="-2" y="-6" width="3.500" height="3.500" fill="#f6f6f6"/><rect x="-6" y="-1" width="3.500" height="3.500" fill="#f6f6f6"/><rect x="1" y="-2" width="3.500" height="3.500" fill="#f6f6f6"/><rect x="-2" y="4" width="3.500" height="3.500" fill="#f6f6f6"/><rect x="4" y="3" width="3.500" height="3.500" fill="#f6f6f6"/></g>
<g transform="translate(1264 567)"><path d="M-8 1C-7-2-3-6 1-7.500C3-7 7-3 8-1L7.500 4C4 6 0 7.500-2 7.500C-5 6-7 4-8 1Z" fill="#c81414" stroke="#e8b8b8" stroke-width="1"/><rect x="-4" y="-2" width="7" height="5" fill="#d8c0b0"/></g>
<g transform="translate(1264 594)"><rect x="-7" y="-8" width="15" height="15" fill="#c81414"/><path d="M8-8L-7 7L8 7Z" fill="#e03030"/><path d="M8-8L-7 7" stroke="#f4e0e0" stroke-width="1.600"/><rect x="-5" y="-6" width="5" height="5" fill="#e8d8d0"/><rect x="1" y="1" width="5" height="5" fill="#e8d8d0"/></g>
</svg>
</div></body></html>
